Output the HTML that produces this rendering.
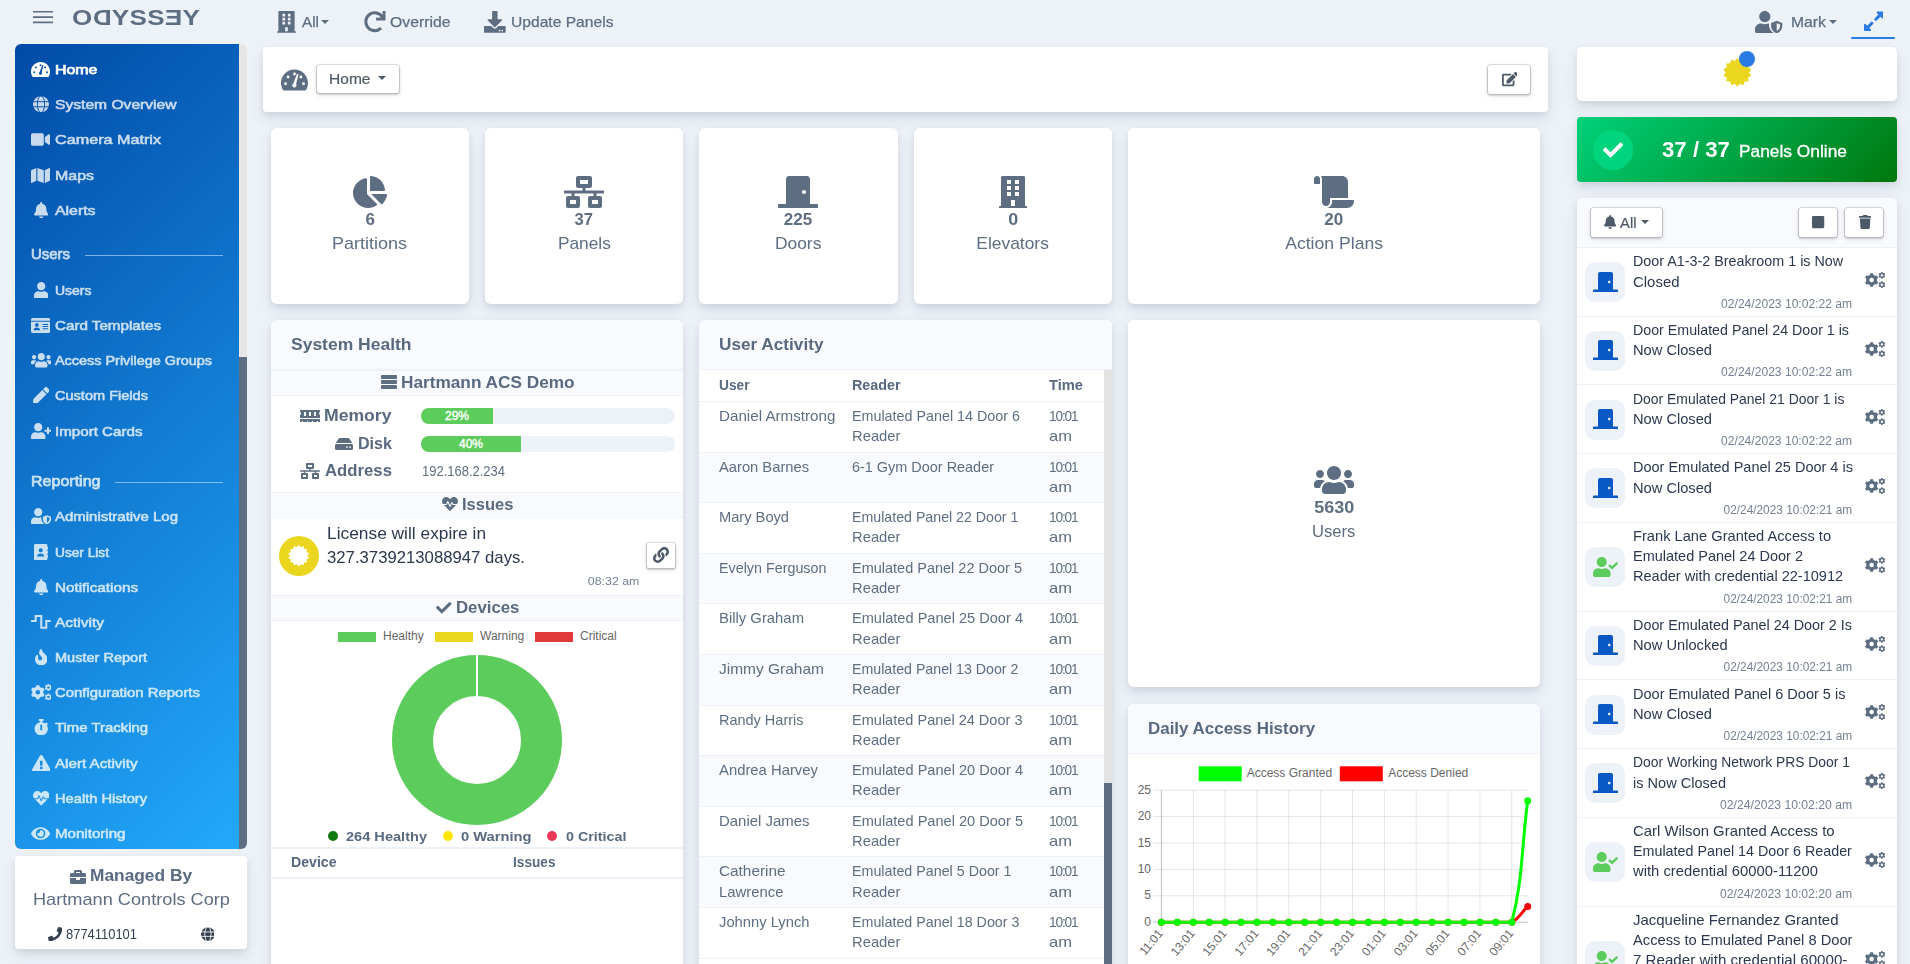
<!DOCTYPE html>
<html lang="en"><head><meta charset="utf-8"><title>Odyssey</title>
<style>
*{box-sizing:border-box}
html,body{margin:0;padding:0}
body{width:1910px;height:964px;overflow:hidden;position:relative;background:#edf2f9;font-family:"Liberation Sans",sans-serif;color:#5e6e82;font-size:14.4px;line-height:1.5}
.abs{position:absolute}
svg{display:block}
.ic{fill:currentColor}
.card{position:absolute;background:#fff;border-radius:6px;box-shadow:0 7px 14px 0 rgba(65,69,88,.1),0 3px 6px 0 rgba(0,0,0,.07)}
.hd{color:#344050}
.hb{position:absolute;left:0;width:20px;height:1.9px;background:#5e6e82}
.logo{font-size:22.8px;font-weight:bold;color:#5e6e82;letter-spacing:.3px;line-height:28px;white-space:nowrap;transform-origin:0 50%;transform:scaleX(1.142)}
.logo b{display:inline-block;transform:scaleX(-1)}
.tt{font-size:14.6px;line-height:22px;color:#5e6e82;white-space:nowrap;-webkit-text-stroke:.25px #5e6e82}
.caret{width:0;height:0;border-left:4.2px solid transparent;border-right:4.2px solid transparent;border-top:4.4px solid #5e6e82}
#side{left:15px;top:44px;width:224px;height:805px;border-radius:6px 0 0 6px;background:linear-gradient(135deg,#014ba7 0%,#22a9fb 100%);overflow:hidden}
.ni{position:absolute;left:16px;height:22px;width:200px;color:#fff;opacity:.78;font-size:13.1px;line-height:22px;white-space:nowrap;-webkit-text-stroke:.55px #fff}
.ni.act{opacity:1;-webkit-text-stroke:.75px #fff}
.ni .nt{position:absolute;left:24px;top:.6px}
.nl{position:absolute;left:16px;color:#fff;opacity:.78;font-size:15.2px;line-height:22px;-webkit-text-stroke:.75px #fff;white-space:nowrap;width:192px}
.nl i{position:absolute;top:12px;height:1px;background:rgba(190,225,255,.8)}
.mb1{font-size:17px;font-weight:bold;line-height:24px;color:#586980;white-space:nowrap}
.mb2{font-size:17px;line-height:24px;color:#5e6e82;white-space:nowrap}
.mb3{font-size:14.4px;line-height:22px;color:#344050;white-space:nowrap}
.btn{position:absolute;background:#fff;background-clip:padding-box;border:1px solid rgba(43,45,80,.13);border-radius:4px;box-shadow:0 2px 5px 0 rgba(43,45,80,.08),0 1px 1.5px 0 rgba(0,0,0,.07),0 1px 2px 0 rgba(0,0,0,.08)}
.bt{font-size:15.2px;line-height:22px;color:#4d5969;white-space:nowrap;-webkit-text-stroke:.2px #4d5969}
.sn{font-size:15.6px;font-weight:bold;line-height:22px;color:#5e6e82}
.sl{font-size:16.6px;line-height:26px;color:#5e6e82}
.chd{position:absolute;left:0;right:0;top:0;background:#f9fafd;border-bottom:1px solid #edf2f9}
.ct{font-size:16.4px;font-weight:bold;line-height:24px;color:#586980;white-space:nowrap}
.band{position:absolute;left:0;right:0;background:#f9fafd;border-top:1px solid #edf2f9;border-bottom:1px solid #edf2f9}
.bl{font-size:16.4px;font-weight:bold;line-height:24px;color:#586980;white-space:nowrap}
.pb{font-size:12px;line-height:16px;color:#fff;-webkit-text-stroke:.35px #fff}
.ip{font-size:14.2px;line-height:20px;color:#5e6e82}
.iss{font-size:16.4px;line-height:24px;color:#2c3850;white-space:nowrap}
.sm{font-size:11.6px;line-height:16px;color:#748194;white-space:nowrap}
.cl{font-size:12px;line-height:18px;color:#666;white-space:nowrap}
.dl{font-size:13.6px;font-weight:bold;line-height:20px;color:#586980;white-space:nowrap}
.th{font-size:14.2px;font-weight:bold;line-height:20px;color:#586980;white-space:nowrap}
.tr{left:0;width:405px;border-bottom:1px solid #edf2f9;font-size:14.4px;line-height:20px;color:#5e6e82;white-space:nowrap}
.po1{font-size:21.5px;font-weight:bold;line-height:30px;color:#fff;white-space:nowrap}
.po2{font-size:15.6px;line-height:22px;color:#fff;white-space:nowrap;-webkit-text-stroke:.3px #fff}
.ai{left:0;right:0;border-bottom:1px solid #edf2f9}
.at{font-size:14.4px;line-height:20px;color:#2c3850;white-space:nowrap}

</style></head>
<body>
<svg class="abs" style="left:33px;top:10px" width="20" height="14" viewBox="0 0 20 14"><path d="M0,1.8H20M0,7.1H20M0,12.4H20" stroke="#5e6e82" stroke-width="1.6" fill="none"/></svg>
<div class="abs logo" style="left:71.8px;top:3px">O<b>D</b>YSS<b>E</b>Y</div>
<div class="abs" style="left:277px;top:11px;color:#5e6e82"><svg class="ic" style="width:18.99px;height:21.70px;" viewBox="0 0 448 512"><path fill-rule="evenodd" d="M436 480h-20V24c0-13.3-10.7-24-24-24H56C42.7 0 32 10.7 32 24v456H12c-6.6 0-12 5.4-12 12v20h448v-20c0-6.600-5.400-12-12-12zM128,64h64v64h-64zM128,160h64v64h-64zM128,256h64v64h-64zM256,64h64v64h-64zM256,160h64v64h-64zM256,256h64v64h-64zM192 480v-96h64v96z"/></svg></div><div class="abs tt" style="left:301.5px;top:11px"><span style="display:inline-block;white-space:nowrap;transform-origin:0 50%;transform:scaleX(1.048);">All</span></div><div class="abs caret" style="left:320.5px;top:20px"></div>
<div class="abs" style="left:364px;top:11px;color:#5e6e82"><svg class="ic" style="width:21.50px;height:21.50px;" viewBox="0 0 512 512"><path d="M500.330 0h-47.410a12 12 0 0 0-12 12.570l4 82.760A247.420 247.420 0 0 0 256 8C119.340 8 7.900 119.530 8 256.190 8.100 393.070 119.100 504 256 504a247.100 247.100 0 0 0 166.180-63.910 12 12 0 0 0 .48-17.430l-34-34a12 12 0 0 0-16.380-.55A176 176 0 1 1 402.100 157.800l-101.530-4.870a12 12 0 0 0-12.570 12v47.410a12 12 0 0 0 12 12h200.330a12 12 0 0 0 12-12V12a12 12 0 0 0-12-12z"/></svg></div><div class="abs tt" style="left:390px;top:11px"><span style="display:inline-block;white-space:nowrap;transform-origin:0 50%;transform:scaleX(1.081);">Override</span></div>
<div class="abs" style="left:484px;top:11px;color:#5e6e82"><svg class="ic" style="width:21.70px;height:21.70px;" viewBox="0 0 512 512"><path d="M216 0h80c13.300 0 24 10.700 24 24v168h87.700c17.800 0 26.700 21.500 14.100 34.100L269.700 378.300c-7.500 7.500-19.800 7.500-27.300 0L90.100 226.100c-12.600-12.600-3.700-34.100 14.100-34.100H192V24c0-13.300 10.700-24 24-24zm296 376v112c0 13.300-10.700 24-24 24H24c-13.300 0-24-10.700-24-24V376c0-13.300 10.700-24 24-24h146.700l49 49c20.100 20.100 52.500 20.100 72.600 0l49-49H488c13.300 0 24 10.700 24 24zm-124 88c0-11-9-20-20-20s-20 9-20 20 9 20 20 20 20-9 20-20zm64 0c0-11-9-20-20-20s-20 9-20 20 9 20 20 20 20-9 20-20z"/></svg></div><div class="abs tt" style="left:511px;top:11px"><span style="display:inline-block;white-space:nowrap;transform-origin:0 50%;transform:scaleX(1.070);">Update Panels</span></div>
<div class="abs" style="left:1755px;top:11px;color:#5e6e82"><svg class="ic" style="width:28.00px;height:22.40px;" viewBox="0 0 640 512"><path fill-rule="evenodd" d="M224 256c70.700 0 128-57.300 128-128S294.700 0 224 0 96 57.300 96 128s57.300 128 128 128zm96 64c0-11 2-21 5-30-4-1-8-2-12-2h-16.700c-22.200 10.200-46.900 16-72.900 16s-50.600-5.800-72.900-16h-16.700C60.200 288 0 348.200 0 422.400V464c0 26.500 21.500 48 48 48h352c10 0 19-3 27-8-66-45-107-110-107-184zM496 224L368 272v64c0 90 60 150 128 176 68-26 128-86 128-176v-64z M496 278v180c45-22 78-68 78-122v-30z"/></svg></div><div class="abs tt" style="left:1791px;top:11px"><span style="display:inline-block;white-space:nowrap;transform-origin:0 50%;transform:scaleX(1.079);">Mark</span></div><div class="abs caret" style="left:1829px;top:20px"></div>
<div class="abs" style="left:1863.5px;top:9.5px;color:#2c7be5"><svg class="ic" style="width:19.69px;height:22.50px;" viewBox="0 0 448 512"><path d="M212.686 315.314L120 408l32.922 31.029c15.120 15.120 4.412 40.971-16.970 40.971h-112C10.697 480 0 469.255 0 456V344c0-21.382 25.803-32.090 40.922-16.971L72 360l92.686-92.686c6.248-6.248 16.379-6.248 22.627 0l25.373 25.373c6.249 6.248 6.249 16.378 0 22.627zm22.628-118.628L328 104l-32.922-31.029C279.958 57.851 290.666 32 312.048 32h112C437.303 32 448 42.745 448 56v112c0 21.382-25.803 32.090-40.922 16.971L376 152l-92.686 92.686c-6.248 6.248-16.379 6.248-22.627 0l-25.373-25.373c-6.249-6.248-6.249-16.378 0-22.627z"/></svg></div>
<div class="abs" style="left:1851px;top:37px;width:44px;height:2px;border-radius:1px;background:#2c7be5"></div>
<div class="abs" style="left:239px;top:44px;width:8px;height:805px;background:#e6e6e6;border-radius:0 6px 6px 0;overflow:hidden"><div style="position:absolute;left:0;top:313px;width:8px;height:492px;background:#5e6e82"></div></div>
<div id="side" class="abs">
<div class="ni act" style="top:14px"><svg class="ic" style="width:19.12px;height:17.00px;position:absolute;left:0.2px;top:2.5px" viewBox="0 0 576 512"><path fill-rule="evenodd" d="M288 32C128.94 32 0 160.94 0 320c0 52.8 14.25 102.26 39.06 144.8 5.61 9.62 16.3 15.2 27.44 15.2h443c11.14 0 21.83-5.58 27.44-15.2C561.75 422.26 576 372.8 576 320c0-159.06-128.94-288-288-288zM258,128a30,30 0 1,0 60,0a30,30 0 1,0 -60,0zM122,192a30,30 0 1,0 60,0a30,30 0 1,0 -60,0zM66,336a30,30 0 1,0 60,0a30,30 0 1,0 -60,0zM394,192a30,30 0 1,0 60,0a30,30 0 1,0 -60,0zM450,336a30,30 0 1,0 60,0a30,30 0 1,0 -60,0zM342,122L374,132L322,342A46,46 0 1,1 262,330z"/></svg><span class="nt"><span style="display:inline-block;white-space:nowrap;transform-origin:0 50%;transform:scaleX(1.216);">Home</span></span></div>
<div class="ni" style="top:49px"><svg class="ic" style="width:15.98px;height:16.50px;position:absolute;left:1.8px;top:2.8px" viewBox="0 0 496 512"><mask id="gm1"><rect width="496" height="512" fill="#000"/><circle cx="248" cy="256" r="248" fill="#fff"/><path d="M0,176H496M0,336H496" stroke="#000" stroke-width="30"/><ellipse cx="248" cy="256" rx="113" ry="262" fill="none" stroke="#000" stroke-width="30"/></mask><rect width="496" height="512" mask="url(#gm1)"/></svg><span class="nt"><span style="display:inline-block;white-space:nowrap;transform-origin:0 50%;transform:scaleX(1.193);">System Overview</span></span></div>
<div class="ni" style="top:84px"><svg class="ic" style="width:19.12px;height:17.00px;position:absolute;left:0.2px;top:2.5px" viewBox="0 0 576 512"><path d="M336.2 64H47.8C21.4 64 0 85.4 0 111.8v288.4C0 426.6 21.4 448 47.8 448h288.4c26.4 0 47.8-21.4 47.8-47.8V111.8c0-26.4-21.4-47.8-47.8-47.8zm189.4 37.7L416 177.3v157.4l109.6 75.5c21.2 14.6 50.4-.3 50.4-25.8V127.5c0-25.4-29.1-40.4-50.4-25.8z"/></svg><span class="nt"><span style="display:inline-block;white-space:nowrap;transform-origin:0 50%;transform:scaleX(1.235);">Camera Matrix</span></span></div>
<div class="ni" style="top:120px"><svg class="ic" style="width:19.12px;height:17.00px;position:absolute;left:0.2px;top:2.5px" viewBox="0 0 576 512"><path d="M0 117.66v346.32c0 11.32 11.43 19.06 21.94 14.86L160 416V32L20.120 87.950A32.006 32.006 0 0 0 0 117.660zM192 416l192 64V96L192 32v384zM554.060 33.160L416 96v384l139.880-55.950A31.996 31.996 0 0 0 576 394.340V48.020c0-11.320-11.430-19.060-21.940-14.860z"/></svg><span class="nt"><span style="display:inline-block;white-space:nowrap;transform-origin:0 50%;transform:scaleX(1.218);">Maps</span></span></div>
<div class="ni" style="top:155px"><svg class="ic" style="width:14.44px;height:16.50px;position:absolute;left:2.6px;top:2.8px" viewBox="0 0 448 512"><path d="M224 512c35.32 0 63.97-28.65 63.97-64H160.03c0 35.35 28.65 64 63.97 64zm215.39-149.71c-19.32-20.76-55.47-51.99-55.47-154.29 0-77.7-54.48-139.9-127.94-155.16V32c0-17.67-14.32-32-31.98-32s-31.98 14.33-31.98 32v20.84C118.56 68.1 64.08 130.3 64.08 208c0 102.3-36.15 133.53-55.47 154.29-6 6.45-8.66 14.16-8.61 21.71.11 16.4 12.98 32 32.1 32h383.8c19.12 0 32-15.6 32.1-32 .05-7.55-2.61-15.27-8.61-21.71z"/></svg><span class="nt"><span style="display:inline-block;white-space:nowrap;transform-origin:0 50%;transform:scaleX(1.210);">Alerts</span></span></div>
<div class="ni" style="top:235px"><svg class="ic" style="width:14.44px;height:16.50px;position:absolute;left:2.6px;top:2.8px" viewBox="0 0 448 512"><path d="M224 256c70.7 0 128-57.3 128-128S294.7 0 224 0 96 57.3 96 128s57.3 128 128 128zm89.6 32h-16.7c-22.2 10.2-46.9 16-72.9 16s-50.6-5.8-72.9-16h-16.7C60.2 288 0 348.2 0 422.4V464c0 26.5 21.5 48 48 48h352c26.5 0 48-21.5 48-48v-41.6c0-74.2-60.2-134.4-134.4-134.4z"/></svg><span class="nt"><span style="display:inline-block;white-space:nowrap;transform-origin:0 50%;transform:scaleX(1.067);">Users</span></span></div>
<div class="ni" style="top:270px"><svg class="ic" style="width:19.12px;height:17.00px;position:absolute;left:0.2px;top:2.5px" viewBox="0 0 576 512"><path fill-rule="evenodd" d="M48 32h480c26.500 0 48 21.500 48 48v32H0V80c0-26.500 21.500-48 48-48zM0 144h576v288c0 26.500-21.500 48-48 48H48c-26.500 0-48-21.500-48-48zM120,240a56,56 0 1,0 112,0a56,56 0 1,0 -112,0zM80,400c0-50,40-80,96-80s96,30,96,80zM352,208h160v32h-160zM352,272h160v32h-160zM352,336h160v32h-160z"/></svg><span class="nt"><span style="display:inline-block;white-space:nowrap;transform-origin:0 50%;transform:scaleX(1.159);">Card Templates</span></span></div>
<div class="ni" style="top:305px"><svg class="ic" style="width:20.62px;height:16.50px;position:absolute;left:-0.5px;top:2.8px" viewBox="0 0 640 512"><path d="M96 224c35.3 0 64-28.7 64-64s-28.7-64-64-64-64 28.7-64 64 28.7 64 64 64zm448 0c35.3 0 64-28.7 64-64s-28.7-64-64-64-64 28.7-64 64 28.7 64 64 64zm32 32h-64c-17.6 0-33.5 7.1-45.1 18.6 40.3 22.1 68.9 62 75.1 109.4h66c17.7 0 32-14.3 32-32v-32c0-35.3-28.7-64-64-64zm-256 0c61.9 0 112-50.1 112-112S381.9 32 320 32 208 82.1 208 144s50.1 112 112 112zm76.8 32h-8.3c-20.8 10-43.9 16-68.5 16s-47.6-6-68.5-16h-8.3C179.6 288 128 339.6 128 403.2V432c0 26.5 21.5 48 48 48h288c26.5 0 48-21.5 48-48v-28.8c0-63.6-51.6-115.2-115.2-115.2zm-223.7-13.4C161.5 263.1 145.6 256 128 256H64c-35.3 0-64 28.7-64 64v32c0 17.7 14.3 32 32 32h65.9c6.3-47.4 34.9-87.3 75.2-109.4z"/></svg><span class="nt"><span style="display:inline-block;white-space:nowrap;transform-origin:0 50%;transform:scaleX(1.101);">Access Privilege Groups</span></span></div>
<div class="ni" style="top:340px"><svg class="ic" style="width:16.50px;height:16.50px;position:absolute;left:1.6px;top:2.8px" viewBox="0 0 512 512"><path d="M290.740 93.240l128.020 128.020-277.990 277.990-114.140 12.600C11.350 513.540-1.560 500.620.140 485.340l12.700-114.220 277.900-277.880zm207.200-19.060l-60.110-60.110c-18.750-18.750-49.160-18.750-67.910 0l-56.550 56.550 128.020 128.020 56.550-56.550c18.750-18.760 18.750-49.160 0-67.910z"/></svg><span class="nt"><span style="display:inline-block;white-space:nowrap;transform-origin:0 50%;transform:scaleX(1.111);">Custom Fields</span></span></div>
<div class="ni" style="top:376px"><svg class="ic" style="width:20.62px;height:16.50px;position:absolute;left:-0.5px;top:2.8px" viewBox="0 0 640 512"><path d="M624 208h-64v-64c0-8.800-7.200-16-16-16h-32c-8.800 0-16 7.200-16 16v64h-64c-8.800 0-16 7.200-16 16v32c0 8.800 7.200 16 16 16h64v64c0 8.800 7.200 16 16 16h32c8.800 0 16-7.200 16-16v-64h64c8.800 0 16-7.200 16-16v-32c0-8.800-7.200-16-16-16zm-400 48c70.700 0 128-57.300 128-128S294.700 0 224 0 96 57.300 96 128s57.300 128 128 128zm89.600 32h-16.700c-22.200 10.200-46.900 16-72.900 16s-50.600-5.800-72.900-16h-16.700C60.200 288 0 348.200 0 422.400V464c0 26.500 21.500 48 48 48h352c26.500 0 48-21.500 48-48v-41.600c0-74.200-60.200-134.400-134.400-134.400z"/></svg><span class="nt"><span style="display:inline-block;white-space:nowrap;transform-origin:0 50%;transform:scaleX(1.156);">Import Cards</span></span></div>
<div class="ni" style="top:461px"><svg class="ic" style="width:20.62px;height:16.50px;position:absolute;left:-0.5px;top:2.8px" viewBox="0 0 640 512"><path fill-rule="evenodd" d="M224 256c70.700 0 128-57.300 128-128S294.700 0 224 0 96 57.300 96 128s57.300 128 128 128zm96 64c0-11 2-21 5-30-4-1-8-2-12-2h-16.700c-22.200 10.200-46.900 16-72.900 16s-50.600-5.800-72.900-16h-16.700C60.200 288 0 348.200 0 422.400V464c0 26.500 21.500 48 48 48h352c10 0 19-3 27-8-66-45-107-110-107-184zM496 224L368 272v64c0 90 60 150 128 176 68-26 128-86 128-176v-64z M496 278v180c45-22 78-68 78-122v-30z"/></svg><span class="nt"><span style="display:inline-block;white-space:nowrap;transform-origin:0 50%;transform:scaleX(1.142);">Administrative Log</span></span></div>
<div class="ni" style="top:497px"><svg class="ic" style="width:14.44px;height:16.50px;position:absolute;left:2.6px;top:2.8px" viewBox="0 0 448 512"><path fill-rule="evenodd" d="M436 160c6.600 0 12-5.400 12-12v-40c0-6.600-5.400-12-12-12h-20V48c0-26.500-21.500-48-48-48H48C21.500 0 0 21.500 0 48v416c0 26.500 21.500 48 48 48h320c26.500 0 48-21.500 48-48v-48h20c6.600 0 12-5.400 12-12v-40c0-6.600-5.400-12-12-12h-20v-64h20c6.600 0 12-5.400 12-12v-40c0-6.600-5.400-12-12-12h-20v-64h20zM144,192a64,64 0 1,0 128,0a64,64 0 1,0 -128,0zM96,384c0-56,50-88,112-88s112,32,112,88z"/></svg><span class="nt"><span style="display:inline-block;white-space:nowrap;transform-origin:0 50%;transform:scaleX(1.045);">User List</span></span></div>
<div class="ni" style="top:532px"><svg class="ic" style="width:14.44px;height:16.50px;position:absolute;left:2.6px;top:2.8px" viewBox="0 0 448 512"><path d="M224 512c35.32 0 63.97-28.65 63.97-64H160.03c0 35.35 28.65 64 63.97 64zm215.39-149.71c-19.32-20.76-55.47-51.99-55.47-154.29 0-77.7-54.48-139.9-127.94-155.16V32c0-17.67-14.32-32-31.98-32s-31.98 14.33-31.98 32v20.84C118.56 68.1 64.08 130.3 64.08 208c0 102.3-36.15 133.53-55.47 154.29-6 6.45-8.66 14.16-8.61 21.71.11 16.4 12.98 32 32.1 32h383.8c19.12 0 32-15.6 32.1-32 .05-7.55-2.61-15.27-8.61-21.71z"/></svg><span class="nt"><span style="display:inline-block;white-space:nowrap;transform-origin:0 50%;transform:scaleX(1.164);">Notifications</span></span></div>
<div class="ni" style="top:567px"><svg class="ic" style="width:19.70px;height:13.80px;position:absolute;left:-0.1px;top:4.1px" viewBox="0 0 197 138"><path d="M0,61H47V10H103V128H153V61H197" fill="none" stroke="currentColor" stroke-width="20"/></svg><span class="nt"><span style="display:inline-block;white-space:nowrap;transform-origin:0 50%;transform:scaleX(1.182);">Activity</span></span></div>
<div class="ni" style="top:602px"><svg class="ic" style="width:12.38px;height:16.50px;position:absolute;left:3.6px;top:2.8px" viewBox="0 0 384 512"><path d="M216 23.860c0-23.800-30.650-32.770-44.150-13.040C48 191.850 224 200 224 288c0 35.630-29.110 64.460-64.850 63.990C123.980 351.540 96 322.220 96 287.050v-85.510c0-21.700-26.470-32.230-41.430-16.500C27.800 213.160 0 261.330 0 320c0 105.870 86.130 192 192 192s192-86.130 192-192c0-170.290-168-193-168-296.140z"/></svg><span class="nt"><span style="display:inline-block;white-space:nowrap;transform-origin:0 50%;transform:scaleX(1.109);">Muster Report</span></span></div>
<div class="ni" style="top:637px"><svg class="ic" style="width:20.62px;height:16.50px;position:absolute;left:-0.5px;top:2.8px" viewBox="0 0 640 512"><path fill-rule="evenodd" d="M423.1,324.6L377.0,404.5L331.1,385.6L264.6,423.9L258.2,473.1L165.8,473.1L159.4,423.9L92.9,385.6L47.0,404.5L0.9,324.6L40.2,294.4L40.2,217.6L0.9,187.4L47.0,107.5L92.9,126.4L159.4,88.1L165.8,38.9L258.2,38.9L264.6,88.1L331.1,126.4L377.0,107.5L423.1,187.4L383.8,217.6L383.8,294.4zM140,256a72,72 0 1,0 144,0a72,72 0 1,0 -144,0zM648.4,141.2L624.7,182.3L599.6,170.8L566.3,190.0L563.7,217.5L516.3,217.5L513.7,190.0L480.4,170.8L455.3,182.3L431.6,141.2L454.1,125.2L454.1,86.8L431.6,70.8L455.3,29.7L480.4,41.2L513.7,22.0L516.3,-5.5L563.7,-5.5L566.3,22.0L599.6,41.2L624.7,29.7L648.4,70.8L625.9,86.8L625.9,125.2zM502,106a38,38 0 1,0 76,0a38,38 0 1,0 -76,0zM648.4,441.2L624.7,482.3L599.6,470.8L566.3,490.0L563.7,517.5L516.3,517.5L513.7,490.0L480.4,470.8L455.3,482.3L431.6,441.2L454.1,425.2L454.1,386.8L431.6,370.8L455.3,329.7L480.4,341.2L513.7,322.0L516.3,294.5L563.7,294.5L566.3,322.0L599.6,341.2L624.7,329.7L648.4,370.8L625.9,386.8L625.9,425.2zM502,406a38,38 0 1,0 76,0a38,38 0 1,0 -76,0z"/></svg><span class="nt"><span style="display:inline-block;white-space:nowrap;transform-origin:0 50%;transform:scaleX(1.138);">Configuration Reports</span></span></div>
<div class="ni" style="top:672px"><svg class="ic" style="width:14.44px;height:16.50px;position:absolute;left:2.6px;top:2.8px" viewBox="0 0 448 512"><path fill-rule="evenodd" d="M432 304c0 114.900-93.100 208-208 208S16 418.900 16 304c0-104 76.300-190.200 176-205.500V64h-28c-6.600 0-12-5.400-12-12V12c0-6.600 5.400-12 12-12h120c6.600 0 12 5.400 12 12v40c0 6.600-5.400 12-12 12h-28v34.500c37.500 5.800 71.700 21.600 99.700 44.600l27.500-27.500c4.700-4.700 12.300-4.700 17 0l28.300 28.300c4.700 4.700 4.700 12.300 0 17l-29.400 29.400-.6.600C419.700 223.300 432 262.200 432 304zM196,176h56v170h-56z"/></svg><span class="nt"><span style="display:inline-block;white-space:nowrap;transform-origin:0 50%;transform:scaleX(1.138);">Time Tracking</span></span></div>
<div class="ni" style="top:708px"><svg class="ic" style="width:18.56px;height:16.50px;position:absolute;left:0.5px;top:2.8px" viewBox="0 0 576 512"><path d="M569.517 440.013C587.975 472.007 564.806 512 527.94 512H48.054c-36.937 0-59.999-40.055-41.577-71.987L246.423 23.985c18.467-32.009 64.72-31.951 83.154 0l239.94 416.028zM288 354c-25.405 0-46 20.595-46 46s20.595 46 46 46 46-20.595 46-46-20.595-46-46-46zm-43.673-165.346l7.418 136c.347 6.364 5.609 11.346 11.982 11.346h48.546c6.373 0 11.635-4.982 11.982-11.346l7.418-136c.375-6.874-5.098-12.654-11.982-12.654h-63.383c-6.884 0-12.356 5.78-11.981 12.654z"/></svg><span class="nt"><span style="display:inline-block;white-space:nowrap;transform-origin:0 50%;transform:scaleX(1.157);">Alert Activity</span></span></div>
<div class="ni" style="top:743px"><svg class="ic" style="width:16.50px;height:16.50px;position:absolute;left:1.6px;top:2.8px" viewBox="0 0 512 512"><path d="M320.200 243.800l-49.700 99.400c-6 12.100-23.400 11.700-28.900-.6l-56.900-126.300-30 71.700H60.600l182.500 186.500c7.100 7.300 18.600 7.300 25.700 0L451.400 288H342.300l-22.100-44.200zM473.700 73.900l-2.400-2.500c-51.500-52.600-135.800-52.600-187.400 0L256 100l-27.900-28.500c-51.500-52.700-135.900-52.700-187.400 0l-2.400 2.400C-10.400 123.700-12.500 203 31 256h102.400l35.900-86.200c5.400-12.900 23.600-13.200 29.400-.4l58.200 129.300 49-97.900c5.900-11.800 22.700-11.800 28.600 0l27.600 55.200H481c43.500-53 41.400-132.300-7.300-182.100z"/></svg><span class="nt"><span style="display:inline-block;white-space:nowrap;transform-origin:0 50%;transform:scaleX(1.119);">Health History</span></span></div>
<div class="ni" style="top:778px"><svg class="ic" style="width:19.12px;height:17.00px;position:absolute;left:0.2px;top:2.5px" viewBox="0 0 576 512"><path d="M572.520 241.400C518.290 135.590 410.930 64 288 64S57.680 135.640 3.480 241.410a32.350 32.350 0 0 0 0 29.190C57.710 376.410 165.070 448 288 448s230.320-71.640 284.520-177.410a32.350 32.350 0 0 0 0-29.190zM288 400a144 144 0 1 1 144-144 143.930 143.930 0 0 1-144 144zm0-240a95.310 95.310 0 0 0-25.310 3.790 47.850 47.850 0 0 1-66.900 66.900A95.780 95.780 0 1 0 288 160z"/></svg><span class="nt"><span style="display:inline-block;white-space:nowrap;transform-origin:0 50%;transform:scaleX(1.153);">Monitoring</span></span></div>
<div class="nl" style="top:199px"><span style="display:inline-block;white-space:nowrap;transform-origin:0 50%;transform:scaleX(0.983);">Users</span><i style="left:54px;width:138px"></i></div>
<div class="nl" style="top:425.5px"><span style="display:inline-block;white-space:nowrap;transform-origin:0 50%;transform:scaleX(1.055);">Reporting</span><i style="left:84px;width:108px"></i></div>
</div>
<div class="card" style="left:15px;top:856px;width:232px;height:92.5px;border-radius:4px">
<div class="abs" style="left:55px;top:13px;color:#5e6e82"><svg class="ic" style="width:16.00px;height:16.00px;" viewBox="0 0 512 512"><path d="M320 336c0 8.840-7.160 16-16 16h-96c-8.840 0-16-7.160-16-16v-48H0v144c0 25.600 22.400 48 48 48h416c25.600 0 48-22.400 48-48V288H320v48zm144-208h-80V80c0-25.600-22.400-48-48-48H176c-25.600 0-48 22.400-48 48v48H48c-25.600 0-48 22.400-48 48v80h512v-80c0-25.600-22.400-48-48-48zm-144 0H192V96h128v32z"/></svg></div>
<div class="abs mb1" style="left:75px;top:8px"><span style="display:inline-block;white-space:nowrap;transform-origin:0 50%;transform:scaleX(1.019);">Managed By</span></div>
<div class="abs mb2" style="left:17.5px;top:32.2px"><span style="display:inline-block;white-space:nowrap;transform-origin:0 50%;transform:scaleX(1.069);">Hartmann Controls Corp</span></div>
<div class="abs" style="left:33px;top:70.5px;color:#344050"><svg class="ic" style="width:14.30px;height:14.30px;" viewBox="0 0 512 512"><path d="M493.400 24.600l-104-24c-11.300-2.600-22.900 3.300-27.500 13.900l-48 112c-4.200 9.800-1.400 21.300 6.900 28l60.600 49.600c-36 76.700-98.900 140.500-177.200 177.200l-49.600-60.600c-6.800-8.300-18.200-11.100-28-6.900l-112 48C3.900 366.500-2 378.100.6 389.400l24 104C27.100 504.200 36.700 512 48 512c256.100 0 464-207.500 464-464 0-11.200-7.700-20.900-18.600-23.400z"/></svg></div>
<div class="abs mb3" style="left:50.5px;top:66.5px"><span style="display:inline-block;white-space:nowrap;transform-origin:0 50%;transform:scaleX(0.899);">8774110101</span></div>
<div class="abs" style="left:185.5px;top:71px;color:#344050"><svg class="ic" style="width:13.85px;height:14.30px;" viewBox="0 0 496 512"><mask id="gm3"><rect width="496" height="512" fill="#000"/><circle cx="248" cy="256" r="248" fill="#fff"/><path d="M0,176H496M0,336H496" stroke="#000" stroke-width="30"/><ellipse cx="248" cy="256" rx="113" ry="262" fill="none" stroke="#000" stroke-width="30"/></mask><rect width="496" height="512" mask="url(#gm3)"/></svg></div>
</div>
<div class="card" style="left:263px;top:47px;width:1285px;height:64.5px;border-radius:4px">
<div class="abs" style="left:18px;top:21px;color:#5e6e82"><svg class="ic" style="width:27.00px;height:24.00px;" viewBox="0 0 576 512"><path fill-rule="evenodd" d="M288 32C128.94 32 0 160.94 0 320c0 52.8 14.25 102.26 39.06 144.8 5.61 9.62 16.3 15.2 27.44 15.2h443c11.14 0 21.83-5.58 27.44-15.2C561.75 422.26 576 372.8 576 320c0-159.06-128.94-288-288-288zM258,128a30,30 0 1,0 60,0a30,30 0 1,0 -60,0zM122,192a30,30 0 1,0 60,0a30,30 0 1,0 -60,0zM66,336a30,30 0 1,0 60,0a30,30 0 1,0 -60,0zM394,192a30,30 0 1,0 60,0a30,30 0 1,0 -60,0zM450,336a30,30 0 1,0 60,0a30,30 0 1,0 -60,0zM342,122L374,132L322,342A46,46 0 1,1 262,330z"/></svg></div>
<div class="btn" style="left:52.5px;top:17.3px;width:84px;height:30px"><div class="abs bt" style="left:12.7px;top:3px"><span style="display:inline-block;white-space:nowrap;transform-origin:0 50%;transform:scaleX(1.024);">Home</span></div><div class="abs caret" style="left:61.7px;top:10.9px;border-top-color:#4d5969"></div></div>
<div class="btn" style="left:1224px;top:17px;width:43.6px;height:30.6px"><div class="abs" style="left:13.5px;top:7.4px;color:#4d5969"><svg class="ic" style="width:15.97px;height:14.20px;" viewBox="0 0 576 512"><path d="M402.600 83.200l90.200 90.200c3.800 3.800 3.800 10 0 13.800L274.400 405.600l-92.800 10.300c-12.400 1.400-22.900-9.100-21.500-21.500l10.300-92.800L388.800 83.200c3.800-3.800 10-3.800 13.800 0zm162-22.900l-48.800-48.800c-15.200-15.200-39.900-15.200-55.200 0l-35.400 35.400c-3.800 3.800-3.800 10 0 13.800l90.200 90.200c3.800 3.800 10 3.800 13.800 0l35.400-35.400c15.200-15.300 15.200-40 0-55.200zM384 346.200V448H64V128h229.800c3.200 0 6.200-1.300 8.500-3.500l40-40c7.600-7.600 2.200-20.500-8.500-20.500H48C21.500 64 0 85.500 0 112v352c0 26.500 21.500 48 48 48h352c26.500 0 48-21.500 48-48V306.200c0-10.700-12.900-16-20.500-8.500l-40 40c-2.200 2.300-3.500 5.300-3.500 8.500z"/></svg></div></div>
</div>
<div class="card" style="left:271px;top:128px;width:198px;height:175.5px">
<div class="abs" style="left:82.0px;top:48px;color:#5e6e82"><svg class="ic" style="width:34.00px;height:32.00px;" viewBox="0 0 544 512"><path d="M527.790 288H290.500l158.030 158.030c6.040 6.040 15.980 6.530 22.190.68 38.700-36.460 65.320-85.610 73.130-140.860 1.340-9.460-6.510-17.850-16.060-17.850zm-15.830-64.800C503.720 103.740 408.260 8.280 288.800.040 279.680-.59 272 7.100 272 16.240V240h223.770c9.140 0 16.820-7.680 16.190-16.800zM224 288V50.710c0-9.550-8.390-17.400-17.840-16.060C86.990 51.490-4.100 155.600.14 280.370 4.500 408.510 114.830 513.590 243.030 511.980c50.400-.63 96.970-16.870 135.260-44.030 7.900-5.600 8.420-17.230 1.570-24.080L224 288z"/></svg></div>
<div class="abs sn" style="left:0;right:0;top:81.2px;text-align:center"><span style="display:inline-block;white-space:nowrap;transform-origin:50% 50%;transform:scaleX(1.094);">6</span></div>
<div class="abs sl" style="left:0;right:0;top:103px;text-align:center"><span style="display:inline-block;white-space:nowrap;transform-origin:50% 50%;transform:scaleX(1.084);">Partitions</span></div>
</div>
<div class="card" style="left:485px;top:128px;width:198px;height:175.5px">
<div class="abs" style="left:79.0px;top:48px;color:#5e6e82"><svg class="ic" style="width:40.00px;height:32.00px;" viewBox="0 0 640 512"><path d="M640 264v-16c0-8.840-7.160-16-16-16H344v-40h72c17.670 0 32-14.330 32-32V32c0-17.670-14.330-32-32-32H224c-17.670 0-32 14.330-32 32v128c0 17.670 14.330 32 32 32h72v40H16c-8.840 0-16 7.160-16 16v16c0 8.840 7.160 16 16 16h104v40H64c-17.670 0-32 14.330-32 32v128c0 17.670 14.330 32 32 32h160c17.670 0 32-14.330 32-32V352c0-17.670-14.330-32-32-32h-56v-40h304v40h-56c-17.670 0-32 14.330-32 32v128c0 17.670 14.330 32 32 32h160c17.670 0 32-14.330 32-32V352c0-17.670-14.330-32-32-32h-56v-40h104c8.840 0 16-7.160 16-16zM256 128V64h128v64H256zm-64 320H96v-64h96v64zm352 0h-96v-64h96v64z"/></svg></div>
<div class="abs sn" style="left:0;right:0;top:81.2px;text-align:center"><span style="display:inline-block;white-space:nowrap;transform-origin:50% 50%;transform:scaleX(1.066);">37</span></div>
<div class="abs sl" style="left:0;right:0;top:103px;text-align:center"><span style="display:inline-block;white-space:nowrap;transform-origin:50% 50%;transform:scaleX(1.044);">Panels</span></div>
</div>
<div class="card" style="left:699px;top:128px;width:198.5px;height:175.5px">
<div class="abs" style="left:79.2px;top:48px;color:#5e6e82"><svg class="ic" style="width:40.00px;height:32.00px;" viewBox="0 0 640 512"><path d="M624 448H512V50.8C512 22.78 490.47 0 464 0H175.99c-26.47 0-48 22.78-48 50.8V448H16c-8.84 0-16 7.16-16 16v32c0 8.84 7.16 16 16 16h608c8.84 0 16-7.16 16-16v-32c0-8.84-7.16-16-16-16zM415.99 288c-17.67 0-32-14.33-32-32s14.33-32 32-32 32 14.33 32 32c.01 17.67-14.32 32-32 32z"/></svg></div>
<div class="abs sn" style="left:0;right:0;top:81.2px;text-align:center"><span style="display:inline-block;white-space:nowrap;transform-origin:50% 50%;transform:scaleX(1.095);">225</span></div>
<div class="abs sl" style="left:0;right:0;top:103px;text-align:center"><span style="display:inline-block;white-space:nowrap;transform-origin:50% 50%;transform:scaleX(1.050);">Doors</span></div>
</div>
<div class="card" style="left:914px;top:128px;width:198px;height:175.5px">
<div class="abs" style="left:85.0px;top:48px;color:#5e6e82"><svg class="ic" style="width:28.00px;height:32.00px;" viewBox="0 0 448 512"><path fill-rule="evenodd" d="M436 480h-20V24c0-13.3-10.7-24-24-24H56C42.7 0 32 10.7 32 24v456H12c-6.6 0-12 5.4-12 12v20h448v-20c0-6.600-5.400-12-12-12zM128,64h64v64h-64zM128,160h64v64h-64zM128,256h64v64h-64zM256,64h64v64h-64zM256,160h64v64h-64zM256,256h64v64h-64zM192 480v-96h64v96z"/></svg></div>
<div class="abs sn" style="left:0;right:0;top:81.2px;text-align:center"><span style="display:inline-block;white-space:nowrap;transform-origin:50% 50%;transform:scaleX(1.151);">0</span></div>
<div class="abs sl" style="left:0;right:0;top:103px;text-align:center"><span style="display:inline-block;white-space:nowrap;transform-origin:50% 50%;transform:scaleX(1.048);">Elevators</span></div>
</div>
<div class="card" style="left:1128px;top:128px;width:412px;height:175.5px">
<div class="abs" style="left:186.0px;top:48px;color:#5e6e82"><svg class="ic" style="width:40.00px;height:32.00px;" viewBox="0 0 640 512"><path d="M48 0C21.530 0 0 21.530 0 48v64c0 8.840 7.160 16 16 16h80V48C96 21.530 74.470 0 48 0zm208 412.570V352h288V96c0-52.940-43.060-96-96-96H111.590C121.740 13.410 128 29.920 128 48v368c0 38.870 34.650 69.650 74.750 63.120C234.220 474 256 444.460 256 412.570zM288 384v32c0 52.930-43.060 96-96 96h336c61.860 0 112-50.140 112-112 0-8.840-7.160-16-16-16H288z"/></svg></div>
<div class="abs sn" style="left:0;right:0;top:81.2px;text-align:center"><span style="display:inline-block;white-space:nowrap;transform-origin:50% 50%;transform:scaleX(1.095);">20</span></div>
<div class="abs sl" style="left:0;right:0;top:103px;text-align:center"><span style="display:inline-block;white-space:nowrap;transform-origin:50% 50%;transform:scaleX(1.062);">Action Plans</span></div>
</div>
<div class="card" style="left:1128px;top:320px;width:412px;height:367px">
<div class="abs" style="left:186.0px;top:144px;color:#5e6e82"><svg class="ic" style="width:40.00px;height:32.00px;" viewBox="0 0 640 512"><path d="M96 224c35.3 0 64-28.7 64-64s-28.7-64-64-64-64 28.7-64 64 28.7 64 64 64zm448 0c35.3 0 64-28.7 64-64s-28.7-64-64-64-64 28.7-64 64 28.7 64 64 64zm32 32h-64c-17.6 0-33.5 7.1-45.1 18.6 40.3 22.1 68.9 62 75.1 109.4h66c17.7 0 32-14.3 32-32v-32c0-35.3-28.7-64-64-64zm-256 0c61.9 0 112-50.1 112-112S381.9 32 320 32 208 82.1 208 144s50.1 112 112 112zm76.8 32h-8.3c-20.8 10-43.9 16-68.5 16s-47.6-6-68.5-16h-8.3C179.6 288 128 339.6 128 403.2V432c0 26.5 21.5 48 48 48h288c26.5 0 48-21.5 48-48v-28.8c0-63.6-51.6-115.2-115.2-115.2zm-223.7-13.4C161.5 263.1 145.6 256 128 256H64c-35.3 0-64 28.7-64 64v32c0 17.7 14.3 32 32 32h65.9c6.3-47.4 34.9-87.3 75.2-109.4z"/></svg></div>
<div class="abs sn" style="left:0;right:0;top:177.2px;text-align:center"><span style="display:inline-block;white-space:nowrap;transform-origin:50% 50%;transform:scaleX(1.153);">5630</span></div>
<div class="abs sl" style="left:0;right:0;top:199px;text-align:center"><span style="display:inline-block;white-space:nowrap;transform-origin:50% 50%;transform:scaleX(1.004);">Users</span></div>
</div>
<div class="card" style="left:271px;top:320px;width:412px;height:660px;overflow:hidden"><div class="chd" style="height:49.5px"><div class="abs ct" style="left:20px;top:12px"><span style="display:inline-block;white-space:nowrap;transform-origin:0 50%;transform:scaleX(1.067);">System Health</span></div></div><div class="band" style="top:49.5px;height:26.5px"><div class="abs" style="left:110px;top:3.2px;color:#5e6e82"><svg class="ic" style="width:16.00px;height:16.00px;" viewBox="0 0 512 512"><path d="M480 160H32c-17.673 0-32-14.327-32-32V64c0-17.673 14.327-32 32-32h448c17.673 0 32 14.327 32 32v64c0 17.673-14.327 32-32 32zm0 160H32c-17.673 0-32-14.327-32-32v-64c0-17.673 14.327-32 32-32h448c17.673 0 32 14.327 32 32v64c0 17.673-14.327 32-32 32zm0 160H32c-17.673 0-32-14.327-32-32v-64c0-17.673 14.327-32 32-32h448c17.673 0 32 14.327 32 32v64c0 17.673-14.327 32-32 32z"/></svg></div><div class="abs bl" style="left:130px;top:-0.7px"><span style="display:inline-block;white-space:nowrap;transform-origin:0 50%;transform:scaleX(1.051);">Hartmann ACS Demo</span></div></div><div class="abs" style="left:29.2px;top:88px;color:#5e6e82"><svg class="ic" style="width:20.00px;height:16.00px;" viewBox="0 0 640 512"><path fill-rule="evenodd" d="M640 130.940V96c0-17.670-14.330-32-32-32H32C14.330 64 0 78.330 0 96v34.940c18.600 6.610 32 24.190 32 45.060s-13.400 38.450-32 45.060V320h640v-98.940c-18.600-6.610-32-24.190-32-45.060s13.400-38.450 32-45.060zM128,128h64v128h-64zM288,128h64v128h-64zM448,128h64v128h-64zM0 448h64v-26.670c0-8.840 7.160-16 16-16s16 7.160 16 16V448h128v-26.670c0-8.840 7.160-16 16-16s16 7.160 16 16V448h128v-26.670c0-8.840 7.160-16 16-16s16 7.160 16 16V448h128v-26.670c0-8.840 7.160-16 16-16s16 7.160 16 16V448h64v-96H0v96z"/></svg></div><div class="abs bl" style="left:53px;top:83px"><span style="display:inline-block;white-space:nowrap;transform-origin:0 50%;transform:scaleX(1.074);">Memory</span></div><div class="abs" style="left:150px;top:88px;width:254px;height:16px;border-radius:8px;background:#edf2f9;overflow:hidden"><div style="width:71.8px;height:16px;background:#5ccc5c"></div><div class="abs pb" style="left:16px;width:40px;top:0;text-align:center">29%</div></div><div class="abs" style="left:64.2px;top:116px;color:#5e6e82"><svg class="ic" style="width:18.00px;height:16.00px;" viewBox="0 0 576 512"><path fill-rule="evenodd" d="M576 304v96c0 26.510-21.490 48-48 48H48c-26.510 0-48-21.490-48-48v-96c0-26.510 21.490-48 48-48h480c26.510 0 48 21.490 48 48zm-48-80a79.557 79.557 0 0 1 30.777 6.165L462.250 85.374A48.003 48.003 0 0 0 422.311 64H153.689a48 48 0 0 0-39.938 21.374L17.223 230.165A79.557 79.557 0 0 1 48 224h480zM452,352a28,28 0 1,0 56,0a28,28 0 1,0 -56,0zM356,352a28,28 0 1,0 56,0a28,28 0 1,0 -56,0z"/></svg></div><div class="abs bl" style="left:87px;top:111px"><span style="display:inline-block;white-space:nowrap;transform-origin:0 50%;transform:scaleX(0.982);">Disk</span></div><div class="abs" style="left:150px;top:116px;width:254px;height:16px;border-radius:8px;background:#edf2f9;overflow:hidden"><div style="width:99.7px;height:16px;background:#5ccc5c"></div><div class="abs pb" style="left:30px;width:40px;top:0;text-align:center">40%</div></div><div class="abs" style="left:29.2px;top:143px;color:#5e6e82"><svg class="ic" style="width:20.00px;height:16.00px;" viewBox="0 0 640 512"><path d="M640 264v-16c0-8.840-7.160-16-16-16H344v-40h72c17.670 0 32-14.330 32-32V32c0-17.670-14.330-32-32-32H224c-17.670 0-32 14.330-32 32v128c0 17.670 14.330 32 32 32h72v40H16c-8.840 0-16 7.160-16 16v16c0 8.840 7.160 16 16 16h104v40H64c-17.670 0-32 14.330-32 32v128c0 17.670 14.330 32 32 32h160c17.670 0 32-14.330 32-32V352c0-17.670-14.330-32-32-32h-56v-40h304v40h-56c-17.670 0-32 14.330-32 32v128c0 17.670 14.330 32 32 32h160c17.670 0 32-14.330 32-32V352c0-17.670-14.330-32-32-32h-56v-40h104c8.840 0 16-7.160 16-16zM256 128V64h128v64H256zm-64 320H96v-64h96v64zm352 0h-96v-64h96v64z"/></svg></div><div class="abs bl" style="left:54px;top:138px"><span style="display:inline-block;white-space:nowrap;transform-origin:0 50%;transform:scaleX(1.021);">Address</span></div><div class="abs ip" style="left:150.5px;top:140.5px"><span style="display:inline-block;white-space:nowrap;transform-origin:0 50%;transform:scaleX(0.915);">192.168.2.234</span></div><div class="band" style="top:172px;height:26px"><div class="abs" style="left:171px;top:2.6px;color:#5e6e82"><svg class="ic" style="width:16.00px;height:16.00px;" viewBox="0 0 512 512"><path d="M320.200 243.800l-49.700 99.400c-6 12.100-23.400 11.700-28.900-.6l-56.900-126.300-30 71.700H60.600l182.500 186.500c7.100 7.300 18.600 7.300 25.700 0L451.400 288H342.300l-22.100-44.200zM473.700 73.900l-2.400-2.500c-51.500-52.600-135.800-52.600-187.400 0L256 100l-27.900-28.500c-51.500-52.700-135.900-52.700-187.400 0l-2.400 2.400C-10.400 123.700-12.500 203 31 256h102.400l35.900-86.200c5.400-12.900 23.600-13.200 29.400-.4l58.200 129.300 49-97.900c5.900-11.800 22.700-11.800 28.600 0l27.600 55.200H481c43.500-53 41.400-132.300-7.300-182.100z"/></svg></div><div class="abs bl" style="left:191px;top:-0.7px"><span style="display:inline-block;white-space:nowrap;transform-origin:0 50%;transform:scaleX(1.009);">Issues</span></div></div><div class="abs" style="left:8px;top:216px;width:40px;height:40px;border-radius:50%;background:#ebd61f"><div class="abs" style="left:9.3px;top:9.3px;color:#fff"><svg class="ic" style="width:21.40px;height:21.40px;" viewBox="0 0 512 512"><path d="M256.0,0.0L302.3,53.2L367.1,25.4L385.7,93.4L456.1,96.4L443.4,165.8L505.6,199.0L464.0,256.0L505.6,313.0L443.4,346.2L456.1,415.6L385.7,418.6L367.1,486.6L302.3,458.8L256.0,512.0L209.7,458.8L144.9,486.6L126.3,418.6L55.9,415.6L68.6,346.2L6.4,313.0L48.0,256.0L6.4,199.0L68.6,165.8L55.9,96.4L126.3,93.4L144.9,25.4L209.7,53.2z"/></svg></div></div>
<div class="abs iss" style="left:56px;top:200.7px"><span style="display:inline-block;white-space:nowrap;transform-origin:0 50%;transform:scaleX(1.058);">License will expire in</span></div>
<div class="abs iss" style="left:56px;top:224.7px"><span style="display:inline-block;white-space:nowrap;transform-origin:0 50%;transform:scaleX(1.020);">327.3739213088947 days.</span></div>
<div class="abs sm" style="right:44px;top:252.8px"><span style="display:inline-block;white-space:nowrap;transform-origin:100% 50%;transform:scaleX(1.065);">08:32 am</span></div>
<div class="btn" style="left:374.8px;top:221.8px;width:30px;height:27.5px;border-radius:3px"><div class="abs" style="left:6.3px;top:4.5px;color:#4d5969"><svg class="ic" style="width:16.00px;height:16.00px;" viewBox="0 0 512 512"><path d="M326.612 185.391c59.747 59.809 58.927 155.698.36 214.590-.11.120-.24.250-.36.370l-67.200 67.200c-59.270 59.270-155.699 59.262-214.960 0-59.270-59.260-59.270-155.700 0-214.960l37.106-37.106c9.840-9.840 26.786-3.300 27.294 10.606.648 17.722 3.826 35.527 9.690 52.721 1.986 5.822.567 12.262-3.783 16.612l-13.087 13.087c-28.026 28.026-28.905 73.660-1.155 101.960 28.024 28.579 74.086 28.749 102.325.51l67.200-67.190c28.191-28.191 28.073-73.757 0-101.830-3.701-3.694-7.429-6.564-10.341-8.569a16.037 16.037 0 0 1-6.947-12.606c-.396-10.567 3.348-21.456 11.698-29.806l21.054-21.055c5.521-5.521 14.182-6.199 20.584-1.731a152.482 152.482 0 0 1 20.522 17.197zM467.547 44.449c-59.261-59.262-155.690-59.270-214.960 0l-67.200 67.200c-.12.120-.25.250-.36.370-58.566 58.892-59.387 154.781.36 214.590a152.454 152.454 0 0 0 20.521 17.196c6.402 4.468 15.064 3.789 20.584-1.731l21.054-21.055c8.350-8.350 12.094-19.239 11.698-29.806a16.037 16.037 0 0 0-6.947-12.606c-2.912-2.005-6.640-4.875-10.341-8.569-28.073-28.073-28.191-73.639 0-101.830l67.200-67.190c28.239-28.239 74.300-28.069 102.325.51 27.750 28.300 26.872 73.934-1.155 101.960l-13.087 13.087c-4.350 4.350-5.769 10.790-3.783 16.612 5.864 17.194 9.042 34.999 9.690 52.721.509 13.906 17.454 20.446 27.294 10.606l37.106-37.106c59.271-59.259 59.271-155.699.001-214.959z"/></svg></div></div><div class="band" style="top:274.5px;height:26px"><div class="abs" style="left:165px;top:4px;color:#5e6e82"><svg class="ic" style="width:15.50px;height:15.50px;" viewBox="0 0 512 512"><path d="M173.898 439.404l-166.4-166.4c-9.997-9.997-9.997-26.206 0-36.204l36.203-36.204c9.997-9.998 26.207-9.998 36.204 0L192 312.69 432.095 72.596c9.997-9.997 26.207-9.997 36.204 0l36.203 36.204c9.997 9.997 9.997 26.206 0 36.204l-294.4 294.401c-9.998 9.997-26.207 9.997-36.204-.001z"/></svg></div><div class="abs bl" style="left:185px;top:-0.7px"><span style="display:inline-block;white-space:nowrap;transform-origin:0 50%;transform:scaleX(1.024);">Devices</span></div></div><div class="abs" style="left:67px;top:311.5px;width:38px;height:10.5px;background:#5ccc5c"></div><div class="abs cl" style="left:112px;top:307px">Healthy</div>
<div class="abs" style="left:164px;top:311.5px;width:38px;height:10.5px;background:#ebd61f"></div><div class="abs cl" style="left:209px;top:307px">Warning</div>
<div class="abs" style="left:264px;top:311.5px;width:38px;height:10.5px;background:#e03a3a"></div><div class="abs cl" style="left:309px;top:307px">Critical</div><svg class="abs" style="left:120px;top:334px" width="172" height="172" viewBox="-86 -86 172 172"><circle r="64.5" fill="none" stroke="#5ccc5c" stroke-width="41"/><rect x="-1" y="-86" width="2" height="43" fill="#fff"/></svg><div class="abs" style="left:57px;top:511.3px;width:10px;height:10px;border-radius:50%;background:#0f7a0f"></div><div class="abs dl" style="left:75px;top:506.8px"><span style="display:inline-block;white-space:nowrap;transform-origin:0 50%;transform:scaleX(1.072);">264 Healthy</span></div><div class="abs" style="left:172px;top:511.3px;width:10px;height:10px;border-radius:50%;background:#ffe600"></div><div class="abs dl" style="left:190px;top:506.8px"><span style="display:inline-block;white-space:nowrap;transform-origin:0 50%;transform:scaleX(1.081);">0 Warning</span></div><div class="abs" style="left:276px;top:511.3px;width:10px;height:10px;border-radius:50%;background:#e63757"></div><div class="abs dl" style="left:294.5px;top:506.8px"><span style="display:inline-block;white-space:nowrap;transform-origin:0 50%;transform:scaleX(1.054);">0 Critical</span></div><div class="abs" style="left:0;right:0;top:526.5px;height:2px;background:#edf2f9"></div><div class="abs" style="left:0;right:0;top:557px;height:2px;background:#edf2f9"></div><div class="abs th" style="left:20px;top:532px"><span style="display:inline-block;white-space:nowrap;transform-origin:0 50%;transform:scaleX(0.995);">Device</span></div><div class="abs th" style="left:242px;top:532px"><span style="display:inline-block;white-space:nowrap;transform-origin:0 50%;transform:scaleX(0.962);">Issues</span></div></div>
<div class="card" style="left:699px;top:320px;width:413px;height:660px;overflow:hidden"><div class="chd" style="height:49.5px"><div class="abs ct" style="left:20px;top:12px"><span style="display:inline-block;white-space:nowrap;transform-origin:0 50%;transform:scaleX(1.049);">User Activity</span></div></div><div class="abs" style="left:405px;top:49.5px;width:8px;height:620px;background:#e3e3e3"><div class="abs" style="left:0;top:413.5px;width:8px;height:210px;background:#5e6e82"></div></div><div class="abs th" style="left:20.1px;top:54.9px"><span style="display:inline-block;white-space:nowrap;transform-origin:0 50%;transform:scaleX(0.966);">User</span></div><div class="abs th" style="left:153px;top:54.9px"><span style="display:inline-block;white-space:nowrap;transform-origin:0 50%;transform:scaleX(1.008);">Reader</span></div><div class="abs th" style="left:350px;top:54.9px"><span style="display:inline-block;white-space:nowrap;transform-origin:0 50%;transform:scaleX(1.035);">Time</span></div><div class="abs" style="left:0;width:405px;top:80.5px;height:2px;background:#edf2f9"></div><div class="abs tr" style="top:82.0px;height:50.6px;background:#fff"><div class="abs" style="left:19.7px;top:4.1px"><span style="display:inline-block;white-space:nowrap;transform-origin:0 50%;transform:scaleX(1.055);">Daniel Armstrong</span></div><div class="abs" style="left:153px;top:4.1px"><span style="display:inline-block;white-space:nowrap;transform-origin:0 50%;transform:scaleX(0.995);">Emulated Panel 14 Door 6</span></div><div class="abs" style="left:153px;top:24.2px"><span style="display:inline-block;white-space:nowrap;transform-origin:0 50%;transform:scaleX(1.027);">Reader</span></div><div class="abs" style="left:350px;top:4.1px"><span style="display:inline-block;white-space:nowrap;transform-origin:0 50%;transform:scaleX(0.950);letter-spacing:-1.2px">10:01</span></div><div class="abs" style="left:350px;top:24.2px"><span style="display:inline-block;white-space:nowrap;transform-origin:0 50%;transform:scaleX(1.150);">am</span></div></div><div class="abs tr" style="top:132.6px;height:50.6px;background:#f9fafd"><div class="abs" style="left:19.7px;top:4.1px"><span style="display:inline-block;white-space:nowrap;transform-origin:0 50%;transform:scaleX(1.023);">Aaron Barnes</span></div><div class="abs" style="left:153px;top:4.1px"><span style="display:inline-block;white-space:nowrap;transform-origin:0 50%;transform:scaleX(1.003);">6-1 Gym Door Reader</span></div><div class="abs" style="left:350px;top:4.1px"><span style="display:inline-block;white-space:nowrap;transform-origin:0 50%;transform:scaleX(0.950);letter-spacing:-1.2px">10:01</span></div><div class="abs" style="left:350px;top:24.2px"><span style="display:inline-block;white-space:nowrap;transform-origin:0 50%;transform:scaleX(1.150);">am</span></div></div><div class="abs tr" style="top:183.2px;height:50.6px;background:#fff"><div class="abs" style="left:19.7px;top:4.1px"><span style="display:inline-block;white-space:nowrap;transform-origin:0 50%;transform:scaleX(1.018);">Mary Boyd</span></div><div class="abs" style="left:153px;top:4.1px"><span style="display:inline-block;white-space:nowrap;transform-origin:0 50%;transform:scaleX(0.986);">Emulated Panel 22 Door 1</span></div><div class="abs" style="left:153px;top:24.2px"><span style="display:inline-block;white-space:nowrap;transform-origin:0 50%;transform:scaleX(1.027);">Reader</span></div><div class="abs" style="left:350px;top:4.1px"><span style="display:inline-block;white-space:nowrap;transform-origin:0 50%;transform:scaleX(0.950);letter-spacing:-1.2px">10:01</span></div><div class="abs" style="left:350px;top:24.2px"><span style="display:inline-block;white-space:nowrap;transform-origin:0 50%;transform:scaleX(1.150);">am</span></div></div><div class="abs tr" style="top:233.8px;height:50.6px;background:#f9fafd"><div class="abs" style="left:19.7px;top:4.1px"><span style="display:inline-block;white-space:nowrap;transform-origin:0 50%;transform:scaleX(0.995);">Evelyn Ferguson</span></div><div class="abs" style="left:153px;top:4.1px"><span style="display:inline-block;white-space:nowrap;transform-origin:0 50%;transform:scaleX(1.007);">Emulated Panel 22 Door 5</span></div><div class="abs" style="left:153px;top:24.2px"><span style="display:inline-block;white-space:nowrap;transform-origin:0 50%;transform:scaleX(1.027);">Reader</span></div><div class="abs" style="left:350px;top:4.1px"><span style="display:inline-block;white-space:nowrap;transform-origin:0 50%;transform:scaleX(0.950);letter-spacing:-1.2px">10:01</span></div><div class="abs" style="left:350px;top:24.2px"><span style="display:inline-block;white-space:nowrap;transform-origin:0 50%;transform:scaleX(1.150);">am</span></div></div><div class="abs tr" style="top:284.4px;height:50.6px;background:#fff"><div class="abs" style="left:19.7px;top:4.1px"><span style="display:inline-block;white-space:nowrap;transform-origin:0 50%;transform:scaleX(1.032);">Billy Graham</span></div><div class="abs" style="left:153px;top:4.1px"><span style="display:inline-block;white-space:nowrap;transform-origin:0 50%;transform:scaleX(1.013);">Emulated Panel 25 Door 4</span></div><div class="abs" style="left:153px;top:24.2px"><span style="display:inline-block;white-space:nowrap;transform-origin:0 50%;transform:scaleX(1.027);">Reader</span></div><div class="abs" style="left:350px;top:4.1px"><span style="display:inline-block;white-space:nowrap;transform-origin:0 50%;transform:scaleX(0.950);letter-spacing:-1.2px">10:01</span></div><div class="abs" style="left:350px;top:24.2px"><span style="display:inline-block;white-space:nowrap;transform-origin:0 50%;transform:scaleX(1.150);">am</span></div></div><div class="abs tr" style="top:335.0px;height:50.6px;background:#f9fafd"><div class="abs" style="left:19.7px;top:4.1px"><span style="display:inline-block;white-space:nowrap;transform-origin:0 50%;transform:scaleX(1.076);">Jimmy Graham</span></div><div class="abs" style="left:153px;top:4.1px"><span style="display:inline-block;white-space:nowrap;transform-origin:0 50%;transform:scaleX(0.986);">Emulated Panel 13 Door 2</span></div><div class="abs" style="left:153px;top:24.2px"><span style="display:inline-block;white-space:nowrap;transform-origin:0 50%;transform:scaleX(1.027);">Reader</span></div><div class="abs" style="left:350px;top:4.1px"><span style="display:inline-block;white-space:nowrap;transform-origin:0 50%;transform:scaleX(0.950);letter-spacing:-1.2px">10:01</span></div><div class="abs" style="left:350px;top:24.2px"><span style="display:inline-block;white-space:nowrap;transform-origin:0 50%;transform:scaleX(1.150);">am</span></div></div><div class="abs tr" style="top:385.6px;height:50.6px;background:#fff"><div class="abs" style="left:19.7px;top:4.1px"><span style="display:inline-block;white-space:nowrap;transform-origin:0 50%;transform:scaleX(1.006);">Randy Harris</span></div><div class="abs" style="left:153px;top:4.1px"><span style="display:inline-block;white-space:nowrap;transform-origin:0 50%;transform:scaleX(1.010);">Emulated Panel 24 Door 3</span></div><div class="abs" style="left:153px;top:24.2px"><span style="display:inline-block;white-space:nowrap;transform-origin:0 50%;transform:scaleX(1.027);">Reader</span></div><div class="abs" style="left:350px;top:4.1px"><span style="display:inline-block;white-space:nowrap;transform-origin:0 50%;transform:scaleX(0.950);letter-spacing:-1.2px">10:01</span></div><div class="abs" style="left:350px;top:24.2px"><span style="display:inline-block;white-space:nowrap;transform-origin:0 50%;transform:scaleX(1.150);">am</span></div></div><div class="abs tr" style="top:436.2px;height:50.6px;background:#f9fafd"><div class="abs" style="left:19.7px;top:4.1px"><span style="display:inline-block;white-space:nowrap;transform-origin:0 50%;transform:scaleX(1.031);">Andrea Harvey</span></div><div class="abs" style="left:153px;top:4.1px"><span style="display:inline-block;white-space:nowrap;transform-origin:0 50%;transform:scaleX(1.013);">Emulated Panel 20 Door 4</span></div><div class="abs" style="left:153px;top:24.2px"><span style="display:inline-block;white-space:nowrap;transform-origin:0 50%;transform:scaleX(1.027);">Reader</span></div><div class="abs" style="left:350px;top:4.1px"><span style="display:inline-block;white-space:nowrap;transform-origin:0 50%;transform:scaleX(0.950);letter-spacing:-1.2px">10:01</span></div><div class="abs" style="left:350px;top:24.2px"><span style="display:inline-block;white-space:nowrap;transform-origin:0 50%;transform:scaleX(1.150);">am</span></div></div><div class="abs tr" style="top:486.8px;height:50.6px;background:#fff"><div class="abs" style="left:19.7px;top:4.1px"><span style="display:inline-block;white-space:nowrap;transform-origin:0 50%;transform:scaleX(1.038);">Daniel James</span></div><div class="abs" style="left:153px;top:4.1px"><span style="display:inline-block;white-space:nowrap;transform-origin:0 50%;transform:scaleX(1.013);">Emulated Panel 20 Door 5</span></div><div class="abs" style="left:153px;top:24.2px"><span style="display:inline-block;white-space:nowrap;transform-origin:0 50%;transform:scaleX(1.027);">Reader</span></div><div class="abs" style="left:350px;top:4.1px"><span style="display:inline-block;white-space:nowrap;transform-origin:0 50%;transform:scaleX(0.950);letter-spacing:-1.2px">10:01</span></div><div class="abs" style="left:350px;top:24.2px"><span style="display:inline-block;white-space:nowrap;transform-origin:0 50%;transform:scaleX(1.150);">am</span></div></div><div class="abs tr" style="top:537.4px;height:50.6px;background:#f9fafd"><div class="abs" style="left:19.7px;top:4.1px"><span style="display:inline-block;white-space:nowrap;transform-origin:0 50%;transform:scaleX(1.066);">Catherine</span></div><div class="abs" style="left:19.7px;top:24.2px"><span style="display:inline-block;white-space:nowrap;transform-origin:0 50%;transform:scaleX(1.034);">Lawrence</span></div><div class="abs" style="left:153px;top:4.1px"><span style="display:inline-block;white-space:nowrap;transform-origin:0 50%;transform:scaleX(0.992);">Emulated Panel 5 Door 1</span></div><div class="abs" style="left:153px;top:24.2px"><span style="display:inline-block;white-space:nowrap;transform-origin:0 50%;transform:scaleX(1.027);">Reader</span></div><div class="abs" style="left:350px;top:4.1px"><span style="display:inline-block;white-space:nowrap;transform-origin:0 50%;transform:scaleX(0.950);letter-spacing:-1.2px">10:01</span></div><div class="abs" style="left:350px;top:24.2px"><span style="display:inline-block;white-space:nowrap;transform-origin:0 50%;transform:scaleX(1.150);">am</span></div></div><div class="abs tr" style="top:588.0px;height:50.6px;background:#fff"><div class="abs" style="left:19.7px;top:4.1px"><span style="display:inline-block;white-space:nowrap;transform-origin:0 50%;transform:scaleX(1.025);">Johnny Lynch</span></div><div class="abs" style="left:153px;top:4.1px"><span style="display:inline-block;white-space:nowrap;transform-origin:0 50%;transform:scaleX(0.992);">Emulated Panel 18 Door 3</span></div><div class="abs" style="left:153px;top:24.2px"><span style="display:inline-block;white-space:nowrap;transform-origin:0 50%;transform:scaleX(1.027);">Reader</span></div><div class="abs" style="left:350px;top:4.1px"><span style="display:inline-block;white-space:nowrap;transform-origin:0 50%;transform:scaleX(0.950);letter-spacing:-1.2px">10:01</span></div><div class="abs" style="left:350px;top:24.2px"><span style="display:inline-block;white-space:nowrap;transform-origin:0 50%;transform:scaleX(1.150);">am</span></div></div></div>
<div class="card" style="left:1128px;top:704px;width:412px;height:280px;overflow:hidden"><div class="chd" style="height:49.5px"><div class="abs ct" style="left:20px;top:12px"><span style="display:inline-block;white-space:nowrap;transform-origin:0 50%;transform:scaleX(1.034);">Daily Access History</span></div></div><svg class="abs" style="left:0;top:0" width="412" height="270" font-family="Liberation Sans, sans-serif" font-size="12" fill="#666"><line x1="25.4" x2="399.7" y1="218.2" y2="218.2" stroke="rgba(0,0,0,.25)" stroke-width="1"/><text x="23.0" y="221.7" text-anchor="end">0</text><line x1="25.4" x2="399.7" y1="191.8" y2="191.8" stroke="rgba(0,0,0,.1)" stroke-width="1"/><text x="23.0" y="195.3" text-anchor="end">5</text><line x1="25.4" x2="399.7" y1="165.4" y2="165.4" stroke="rgba(0,0,0,.1)" stroke-width="1"/><text x="23.0" y="168.9" text-anchor="end">10</text><line x1="25.4" x2="399.7" y1="139.0" y2="139.0" stroke="rgba(0,0,0,.1)" stroke-width="1"/><text x="23.0" y="142.5" text-anchor="end">15</text><line x1="25.4" x2="399.7" y1="112.6" y2="112.6" stroke="rgba(0,0,0,.1)" stroke-width="1"/><text x="23.0" y="116.1" text-anchor="end">20</text><line x1="25.4" x2="399.7" y1="86.2" y2="86.2" stroke="rgba(0,0,0,.1)" stroke-width="1"/><text x="23.0" y="89.7" text-anchor="end">25</text><line x1="33.4" x2="33.4" y1="86.2" y2="226.2" stroke="rgba(0,0,0,.25)" stroke-width="1"/><text transform="translate(33.2,227.7) rotate(-50)" text-anchor="end" dominant-baseline="middle">11:01</text><line x1="65.3" x2="65.3" y1="86.2" y2="226.2" stroke="rgba(0,0,0,.1)" stroke-width="1"/><text transform="translate(65.1,227.7) rotate(-50)" text-anchor="end" dominant-baseline="middle">13:01</text><line x1="97.1" x2="97.1" y1="86.2" y2="226.2" stroke="rgba(0,0,0,.1)" stroke-width="1"/><text transform="translate(96.9,227.7) rotate(-50)" text-anchor="end" dominant-baseline="middle">15:01</text><line x1="129.0" x2="129.0" y1="86.2" y2="226.2" stroke="rgba(0,0,0,.1)" stroke-width="1"/><text transform="translate(128.8,227.7) rotate(-50)" text-anchor="end" dominant-baseline="middle">17:01</text><line x1="160.8" x2="160.8" y1="86.2" y2="226.2" stroke="rgba(0,0,0,.1)" stroke-width="1"/><text transform="translate(160.6,227.7) rotate(-50)" text-anchor="end" dominant-baseline="middle">19:01</text><line x1="192.7" x2="192.7" y1="86.2" y2="226.2" stroke="rgba(0,0,0,.1)" stroke-width="1"/><text transform="translate(192.5,227.7) rotate(-50)" text-anchor="end" dominant-baseline="middle">21:01</text><line x1="224.5" x2="224.5" y1="86.2" y2="226.2" stroke="rgba(0,0,0,.1)" stroke-width="1"/><text transform="translate(224.3,227.7) rotate(-50)" text-anchor="end" dominant-baseline="middle">23:01</text><line x1="256.4" x2="256.4" y1="86.2" y2="226.2" stroke="rgba(0,0,0,.1)" stroke-width="1"/><text transform="translate(256.2,227.7) rotate(-50)" text-anchor="end" dominant-baseline="middle">01:01</text><line x1="288.2" x2="288.2" y1="86.2" y2="226.2" stroke="rgba(0,0,0,.1)" stroke-width="1"/><text transform="translate(288.0,227.7) rotate(-50)" text-anchor="end" dominant-baseline="middle">03:01</text><line x1="320.1" x2="320.1" y1="86.2" y2="226.2" stroke="rgba(0,0,0,.1)" stroke-width="1"/><text transform="translate(319.9,227.7) rotate(-50)" text-anchor="end" dominant-baseline="middle">05:01</text><line x1="351.9" x2="351.9" y1="86.2" y2="226.2" stroke="rgba(0,0,0,.1)" stroke-width="1"/><text transform="translate(351.7,227.7) rotate(-50)" text-anchor="end" dominant-baseline="middle">07:01</text><line x1="383.8" x2="383.8" y1="86.2" y2="226.2" stroke="rgba(0,0,0,.1)" stroke-width="1"/><text transform="translate(383.6,227.7) rotate(-50)" text-anchor="end" dominant-baseline="middle">09:01</text><path d="M33.4,218.2L383.8,218.2C391.2,214.5 393.3,208.7 399.7,202.4" fill="none" stroke="#ff0000" stroke-width="3" stroke-linejoin="round"/><circle cx="33.4" cy="218.2" r="3.5" fill="#ff0000"/><circle cx="49.3" cy="218.2" r="3.5" fill="#ff0000"/><circle cx="65.3" cy="218.2" r="3.5" fill="#ff0000"/><circle cx="81.2" cy="218.2" r="3.5" fill="#ff0000"/><circle cx="97.1" cy="218.2" r="3.5" fill="#ff0000"/><circle cx="113.0" cy="218.2" r="3.5" fill="#ff0000"/><circle cx="129.0" cy="218.2" r="3.5" fill="#ff0000"/><circle cx="144.9" cy="218.2" r="3.5" fill="#ff0000"/><circle cx="160.8" cy="218.2" r="3.5" fill="#ff0000"/><circle cx="176.7" cy="218.2" r="3.5" fill="#ff0000"/><circle cx="192.7" cy="218.2" r="3.5" fill="#ff0000"/><circle cx="208.6" cy="218.2" r="3.5" fill="#ff0000"/><circle cx="224.5" cy="218.2" r="3.5" fill="#ff0000"/><circle cx="240.4" cy="218.2" r="3.5" fill="#ff0000"/><circle cx="256.4" cy="218.2" r="3.5" fill="#ff0000"/><circle cx="272.3" cy="218.2" r="3.5" fill="#ff0000"/><circle cx="288.2" cy="218.2" r="3.5" fill="#ff0000"/><circle cx="304.1" cy="218.2" r="3.5" fill="#ff0000"/><circle cx="320.1" cy="218.2" r="3.5" fill="#ff0000"/><circle cx="336.0" cy="218.2" r="3.5" fill="#ff0000"/><circle cx="351.9" cy="218.2" r="3.5" fill="#ff0000"/><circle cx="367.8" cy="218.2" r="3.5" fill="#ff0000"/><circle cx="383.8" cy="218.2" r="3.5" fill="#ff0000"/><circle cx="399.7" cy="202.4" r="3.5" fill="#ff0000"/><path d="M33.4,218.2L383.8,218.2C395.0,175.2 393.3,145.3 399.7,96.8" fill="none" stroke="#00ff00" stroke-width="3" stroke-linejoin="round"/><circle cx="33.4" cy="218.2" r="3.5" fill="#00ff00"/><circle cx="49.3" cy="218.2" r="3.5" fill="#00ff00"/><circle cx="65.3" cy="218.2" r="3.5" fill="#00ff00"/><circle cx="81.2" cy="218.2" r="3.5" fill="#00ff00"/><circle cx="97.1" cy="218.2" r="3.5" fill="#00ff00"/><circle cx="113.0" cy="218.2" r="3.5" fill="#00ff00"/><circle cx="129.0" cy="218.2" r="3.5" fill="#00ff00"/><circle cx="144.9" cy="218.2" r="3.5" fill="#00ff00"/><circle cx="160.8" cy="218.2" r="3.5" fill="#00ff00"/><circle cx="176.7" cy="218.2" r="3.5" fill="#00ff00"/><circle cx="192.7" cy="218.2" r="3.5" fill="#00ff00"/><circle cx="208.6" cy="218.2" r="3.5" fill="#00ff00"/><circle cx="224.5" cy="218.2" r="3.5" fill="#00ff00"/><circle cx="240.4" cy="218.2" r="3.5" fill="#00ff00"/><circle cx="256.4" cy="218.2" r="3.5" fill="#00ff00"/><circle cx="272.3" cy="218.2" r="3.5" fill="#00ff00"/><circle cx="288.2" cy="218.2" r="3.5" fill="#00ff00"/><circle cx="304.1" cy="218.2" r="3.5" fill="#00ff00"/><circle cx="320.1" cy="218.2" r="3.5" fill="#00ff00"/><circle cx="336.0" cy="218.2" r="3.5" fill="#00ff00"/><circle cx="351.9" cy="218.2" r="3.5" fill="#00ff00"/><circle cx="367.8" cy="218.2" r="3.5" fill="#00ff00"/><circle cx="383.8" cy="218.2" r="3.5" fill="#00ff00"/><circle cx="399.7" cy="96.8" r="3.5" fill="#00ff00"/><rect x="70.7" y="62.3" width="43" height="15" fill="#00ff00"/><text x="118.7" y="73.2">Access Granted</text><rect x="211.8" y="62.3" width="43" height="15" fill="#ff0000"/><text x="260.2" y="73.2">Access Denied</text></svg></div>
<div class="card" style="left:1577px;top:47px;width:320px;height:54px;border-radius:5px">
<div class="abs" style="left:145.5px;top:11px;color:#ebd61f"><svg class="ic" style="width:28.80px;height:28.80px;" viewBox="0 0 512 512"><path d="M256.0,0.0L302.3,53.2L367.1,25.4L385.7,93.4L456.1,96.4L443.4,165.8L505.6,199.0L464.0,256.0L505.6,313.0L443.4,346.2L456.1,415.6L385.7,418.6L367.1,486.6L302.3,458.8L256.0,512.0L209.7,458.8L144.9,486.6L126.3,418.6L55.9,415.6L68.6,346.2L6.4,313.0L48.0,256.0L6.4,199.0L68.6,165.8L55.9,96.4L126.3,93.4L144.9,25.4L209.7,53.2z"/></svg></div>
<div class="abs" style="left:161.9px;top:4.1px;width:16px;height:16px;border-radius:50%;background:#2c7be5"></div>
</div>
<div class="card" style="left:1577px;top:117px;width:320px;height:64.5px;border-radius:4px;background:linear-gradient(-45deg,#00770d 0%,#00d27a 100%)">
<div class="abs" style="left:16px;top:12.5px;width:40px;height:40px;border-radius:50%;background:rgba(0,214,128,.9)"></div>
<div class="abs" style="left:26px;top:22.5px;color:#fff"><svg class="ic" style="width:20.00px;height:20.00px;" viewBox="0 0 512 512"><path d="M173.898 439.404l-166.4-166.4c-9.997-9.997-9.997-26.206 0-36.204l36.203-36.204c9.997-9.998 26.207-9.998 36.204 0L192 312.69 432.095 72.596c9.997-9.997 26.207-9.997 36.204 0l36.203 36.204c9.997 9.997 9.997 26.206 0 36.204l-294.4 294.401c-9.998 9.997-26.207 9.997-36.204-.001z"/></svg></div>
<div class="abs po1" style="left:85px;top:17.6px"><span style="display:inline-block;white-space:nowrap;transform-origin:0 50%;transform:scaleX(1.034);">37 / 37</span></div>
<div class="abs po2" style="left:161.5px;top:23.7px"><span style="display:inline-block;white-space:nowrap;transform-origin:0 50%;transform:scaleX(1.112);">Panels Online</span></div>
</div>
<div class="card" style="left:1577px;top:198px;width:320px;height:780px;overflow:hidden"><div class="chd" style="height:49.5px"></div><div class="btn" style="left:13px;top:9px;width:72.6px;height:31px"><div class="abs" style="left:13px;top:7px;color:#4d5969"><svg class="ic" style="width:12.25px;height:14.00px;" viewBox="0 0 448 512"><path d="M224 512c35.32 0 63.97-28.65 63.97-64H160.03c0 35.35 28.65 64 63.97 64zm215.39-149.71c-19.32-20.76-55.47-51.99-55.47-154.29 0-77.7-54.48-139.9-127.94-155.16V32c0-17.67-14.32-32-31.98-32s-31.98 14.33-31.98 32v20.84C118.56 68.1 64.08 130.3 64.08 208c0 102.3-36.15 133.53-55.47 154.29-6 6.45-8.66 14.16-8.61 21.71.11 16.4 12.98 32 32.1 32h383.8c19.12 0 32-15.6 32.1-32 .05-7.55-2.61-15.27-8.61-21.71z"/></svg></div><div class="abs bt" style="left:29.3px;top:3.5px;font-size:14.6px"><span style="display:inline-block;white-space:nowrap;transform-origin:0 50%;transform:scaleX(1.017);">All</span></div><div class="abs caret" style="left:49.5px;top:12.3px;border-top-color:#4d5969;border-left-width:4.6px;border-right-width:4.6px;border-top-width:4.8px"></div></div>
<div class="btn" style="left:221px;top:9px;width:39.6px;height:31px"><div class="abs" style="left:13.4px;top:7.2px;color:#4d5969"><svg class="ic" style="width:12.25px;height:14.00px;" viewBox="0 0 448 512"><path d="M400 32H48C21.5 32 0 53.5 0 80v352c0 26.5 21.5 48 48 48h352c26.5 0 48-21.5 48-48V80c0-26.5-21.5-48-48-48z"/></svg></div></div>
<div class="btn" style="left:267px;top:9px;width:39.6px;height:31px"><div class="abs" style="left:13.6px;top:7.2px;color:#4d5969"><svg class="ic" style="width:12.25px;height:14.00px;" viewBox="0 0 448 512"><path d="M432 32H312l-9.4-18.7A24 24 0 0 0 281.1 0H166.8a23.72 23.72 0 0 0-21.4 13.3L136 32H16A16 16 0 0 0 0 48v32a16 16 0 0 0 16 16h416a16 16 0 0 0 16-16V48a16 16 0 0 0-16-16zM53.2 467a48 48 0 0 0 47.9 45h245.8a48 48 0 0 0 47.9-45L416 128H32z"/></svg></div></div><div class="abs ai" style="top:50.0px;height:68.7px"><div class="abs" style="left:8px;top:14.4px;width:40px;height:40px;border-radius:10px;background:#edf2f9"><div class="abs" style="left:7.5px;top:9.4px;color:#0a58c4"><svg class="ic" style="width:25.00px;height:20.00px;" viewBox="0 0 640 512"><path d="M624 448H512V50.8C512 22.78 490.47 0 464 0H175.99c-26.47 0-48 22.78-48 50.8V448H16c-8.84 0-16 7.16-16 16v32c0 8.84 7.16 16 16 16h608c8.84 0 16-7.16 16-16v-32c0-8.84-7.16-16-16-16zM415.99 288c-17.67 0-32-14.33-32-32s14.33-32 32-32 32 14.33 32 32c.01 17.67-14.32 32-32 32z"/></svg></div></div><div class="abs at" style="left:56px;top:3.3px"><span style="display:inline-block;white-space:nowrap;transform-origin:0 50%;transform:scaleX(0.995);">Door A1-3-2 Breakroom 1 is Now</span></div><div class="abs at" style="left:56px;top:23.5px"><span style="display:inline-block;white-space:nowrap;transform-origin:0 50%;transform:scaleX(1.038);">Closed</span></div><div class="abs sm" style="right:44.5px;top:47.8px;font-size:12px"><span style="display:inline-block;white-space:nowrap;transform-origin:100% 50%;transform:scaleX(1.007);">02/24/2023 10:02:22 am</span></div><div class="abs" style="left:288px;top:24.1px;color:#5e6e82"><svg class="ic" style="width:20.00px;height:16.00px;" viewBox="0 0 640 512"><path fill-rule="evenodd" d="M423.1,324.6L377.0,404.5L331.1,385.6L264.6,423.9L258.2,473.1L165.8,473.1L159.4,423.9L92.9,385.6L47.0,404.5L0.9,324.6L40.2,294.4L40.2,217.6L0.9,187.4L47.0,107.5L92.9,126.4L159.4,88.1L165.8,38.9L258.2,38.9L264.6,88.1L331.1,126.4L377.0,107.5L423.1,187.4L383.8,217.6L383.8,294.4zM140,256a72,72 0 1,0 144,0a72,72 0 1,0 -144,0zM648.4,141.2L624.7,182.3L599.6,170.8L566.3,190.0L563.7,217.5L516.3,217.5L513.7,190.0L480.4,170.8L455.3,182.3L431.6,141.2L454.1,125.2L454.1,86.8L431.6,70.8L455.3,29.7L480.4,41.2L513.7,22.0L516.3,-5.5L563.7,-5.5L566.3,22.0L599.6,41.2L624.7,29.7L648.4,70.8L625.9,86.8L625.9,125.2zM502,106a38,38 0 1,0 76,0a38,38 0 1,0 -76,0zM648.4,441.2L624.7,482.3L599.6,470.8L566.3,490.0L563.7,517.5L516.3,517.5L513.7,490.0L480.4,470.8L455.3,482.3L431.6,441.2L454.1,425.2L454.1,386.8L431.6,370.8L455.3,329.7L480.4,341.2L513.7,322.0L516.3,294.5L563.7,294.5L566.3,322.0L599.6,341.2L624.7,329.7L648.4,370.8L625.9,386.8L625.9,425.2zM502,406a38,38 0 1,0 76,0a38,38 0 1,0 -76,0z"/></svg></div></div><div class="abs ai" style="top:118.7px;height:68.7px"><div class="abs" style="left:8px;top:14.4px;width:40px;height:40px;border-radius:10px;background:#edf2f9"><div class="abs" style="left:7.5px;top:9.4px;color:#0a58c4"><svg class="ic" style="width:25.00px;height:20.00px;" viewBox="0 0 640 512"><path d="M624 448H512V50.8C512 22.78 490.47 0 464 0H175.99c-26.47 0-48 22.78-48 50.8V448H16c-8.84 0-16 7.16-16 16v32c0 8.84 7.16 16 16 16h608c8.84 0 16-7.16 16-16v-32c0-8.84-7.16-16-16-16zM415.99 288c-17.67 0-32-14.33-32-32s14.33-32 32-32 32 14.33 32 32c.01 17.67-14.32 32-32 32z"/></svg></div></div><div class="abs at" style="left:56px;top:3.3px"><span style="display:inline-block;white-space:nowrap;transform-origin:0 50%;transform:scaleX(0.989);">Door Emulated Panel 24 Door 1 is</span></div><div class="abs at" style="left:56px;top:23.5px"><span style="display:inline-block;white-space:nowrap;transform-origin:0 50%;transform:scaleX(1.018);">Now Closed</span></div><div class="abs sm" style="right:44.5px;top:47.8px;font-size:12px"><span style="display:inline-block;white-space:nowrap;transform-origin:100% 50%;transform:scaleX(1.007);">02/24/2023 10:02:22 am</span></div><div class="abs" style="left:288px;top:24.1px;color:#5e6e82"><svg class="ic" style="width:20.00px;height:16.00px;" viewBox="0 0 640 512"><path fill-rule="evenodd" d="M423.1,324.6L377.0,404.5L331.1,385.6L264.6,423.9L258.2,473.1L165.8,473.1L159.4,423.9L92.9,385.6L47.0,404.5L0.9,324.6L40.2,294.4L40.2,217.6L0.9,187.4L47.0,107.5L92.9,126.4L159.4,88.1L165.8,38.9L258.2,38.9L264.6,88.1L331.1,126.4L377.0,107.5L423.1,187.4L383.8,217.6L383.8,294.4zM140,256a72,72 0 1,0 144,0a72,72 0 1,0 -144,0zM648.4,141.2L624.7,182.3L599.6,170.8L566.3,190.0L563.7,217.5L516.3,217.5L513.7,190.0L480.4,170.8L455.3,182.3L431.6,141.2L454.1,125.2L454.1,86.8L431.6,70.8L455.3,29.7L480.4,41.2L513.7,22.0L516.3,-5.5L563.7,-5.5L566.3,22.0L599.6,41.2L624.7,29.7L648.4,70.8L625.9,86.8L625.9,125.2zM502,106a38,38 0 1,0 76,0a38,38 0 1,0 -76,0zM648.4,441.2L624.7,482.3L599.6,470.8L566.3,490.0L563.7,517.5L516.3,517.5L513.7,490.0L480.4,470.8L455.3,482.3L431.6,441.2L454.1,425.2L454.1,386.8L431.6,370.8L455.3,329.7L480.4,341.2L513.7,322.0L516.3,294.5L563.7,294.5L566.3,322.0L599.6,341.2L624.7,329.7L648.4,370.8L625.9,386.8L625.9,425.2zM502,406a38,38 0 1,0 76,0a38,38 0 1,0 -76,0z"/></svg></div></div><div class="abs ai" style="top:187.4px;height:68.7px"><div class="abs" style="left:8px;top:14.4px;width:40px;height:40px;border-radius:10px;background:#edf2f9"><div class="abs" style="left:7.5px;top:9.4px;color:#0a58c4"><svg class="ic" style="width:25.00px;height:20.00px;" viewBox="0 0 640 512"><path d="M624 448H512V50.8C512 22.78 490.47 0 464 0H175.99c-26.47 0-48 22.78-48 50.8V448H16c-8.84 0-16 7.16-16 16v32c0 8.84 7.16 16 16 16h608c8.84 0 16-7.16 16-16v-32c0-8.84-7.16-16-16-16zM415.99 288c-17.67 0-32-14.33-32-32s14.33-32 32-32 32 14.33 32 32c.01 17.67-14.32 32-32 32z"/></svg></div></div><div class="abs at" style="left:56px;top:3.3px"><span style="display:inline-block;white-space:nowrap;transform-origin:0 50%;transform:scaleX(0.968);">Door Emulated Panel 21 Door 1 is</span></div><div class="abs at" style="left:56px;top:23.5px"><span style="display:inline-block;white-space:nowrap;transform-origin:0 50%;transform:scaleX(1.018);">Now Closed</span></div><div class="abs sm" style="right:44.5px;top:47.8px;font-size:12px"><span style="display:inline-block;white-space:nowrap;transform-origin:100% 50%;transform:scaleX(1.007);">02/24/2023 10:02:22 am</span></div><div class="abs" style="left:288px;top:24.1px;color:#5e6e82"><svg class="ic" style="width:20.00px;height:16.00px;" viewBox="0 0 640 512"><path fill-rule="evenodd" d="M423.1,324.6L377.0,404.5L331.1,385.6L264.6,423.9L258.2,473.1L165.8,473.1L159.4,423.9L92.9,385.6L47.0,404.5L0.9,324.6L40.2,294.4L40.2,217.6L0.9,187.4L47.0,107.5L92.9,126.4L159.4,88.1L165.8,38.9L258.2,38.9L264.6,88.1L331.1,126.4L377.0,107.5L423.1,187.4L383.8,217.6L383.8,294.4zM140,256a72,72 0 1,0 144,0a72,72 0 1,0 -144,0zM648.4,141.2L624.7,182.3L599.6,170.8L566.3,190.0L563.7,217.5L516.3,217.5L513.7,190.0L480.4,170.8L455.3,182.3L431.6,141.2L454.1,125.2L454.1,86.8L431.6,70.8L455.3,29.7L480.4,41.2L513.7,22.0L516.3,-5.5L563.7,-5.5L566.3,22.0L599.6,41.2L624.7,29.7L648.4,70.8L625.9,86.8L625.9,125.2zM502,106a38,38 0 1,0 76,0a38,38 0 1,0 -76,0zM648.4,441.2L624.7,482.3L599.6,470.8L566.3,490.0L563.7,517.5L516.3,517.5L513.7,490.0L480.4,470.8L455.3,482.3L431.6,441.2L454.1,425.2L454.1,386.8L431.6,370.8L455.3,329.7L480.4,341.2L513.7,322.0L516.3,294.5L563.7,294.5L566.3,322.0L599.6,341.2L624.7,329.7L648.4,370.8L625.9,386.8L625.9,425.2zM502,406a38,38 0 1,0 76,0a38,38 0 1,0 -76,0z"/></svg></div></div><div class="abs ai" style="top:256.1px;height:68.7px"><div class="abs" style="left:8px;top:14.4px;width:40px;height:40px;border-radius:10px;background:#edf2f9"><div class="abs" style="left:7.5px;top:9.4px;color:#0a58c4"><svg class="ic" style="width:25.00px;height:20.00px;" viewBox="0 0 640 512"><path d="M624 448H512V50.8C512 22.78 490.47 0 464 0H175.99c-26.47 0-48 22.78-48 50.8V448H16c-8.84 0-16 7.16-16 16v32c0 8.84 7.16 16 16 16h608c8.84 0 16-7.16 16-16v-32c0-8.84-7.16-16-16-16zM415.99 288c-17.67 0-32-14.33-32-32s14.33-32 32-32 32 14.33 32 32c.01 17.67-14.32 32-32 32z"/></svg></div></div><div class="abs at" style="left:56px;top:3.3px"><span style="display:inline-block;white-space:nowrap;transform-origin:0 50%;transform:scaleX(1.007);">Door Emulated Panel 25 Door 4 is</span></div><div class="abs at" style="left:56px;top:23.5px"><span style="display:inline-block;white-space:nowrap;transform-origin:0 50%;transform:scaleX(1.018);">Now Closed</span></div><div class="abs sm" style="right:44.5px;top:47.8px;font-size:12px"><span style="display:inline-block;white-space:nowrap;transform-origin:100% 50%;transform:scaleX(0.988);">02/24/2023 10:02:21 am</span></div><div class="abs" style="left:288px;top:24.1px;color:#5e6e82"><svg class="ic" style="width:20.00px;height:16.00px;" viewBox="0 0 640 512"><path fill-rule="evenodd" d="M423.1,324.6L377.0,404.5L331.1,385.6L264.6,423.9L258.2,473.1L165.8,473.1L159.4,423.9L92.9,385.6L47.0,404.5L0.9,324.6L40.2,294.4L40.2,217.6L0.9,187.4L47.0,107.5L92.9,126.4L159.4,88.1L165.8,38.9L258.2,38.9L264.6,88.1L331.1,126.4L377.0,107.5L423.1,187.4L383.8,217.6L383.8,294.4zM140,256a72,72 0 1,0 144,0a72,72 0 1,0 -144,0zM648.4,141.2L624.7,182.3L599.6,170.8L566.3,190.0L563.7,217.5L516.3,217.5L513.7,190.0L480.4,170.8L455.3,182.3L431.6,141.2L454.1,125.2L454.1,86.8L431.6,70.8L455.3,29.7L480.4,41.2L513.7,22.0L516.3,-5.5L563.7,-5.5L566.3,22.0L599.6,41.2L624.7,29.7L648.4,70.8L625.9,86.8L625.9,125.2zM502,106a38,38 0 1,0 76,0a38,38 0 1,0 -76,0zM648.4,441.2L624.7,482.3L599.6,470.8L566.3,490.0L563.7,517.5L516.3,517.5L513.7,490.0L480.4,470.8L455.3,482.3L431.6,441.2L454.1,425.2L454.1,386.8L431.6,370.8L455.3,329.7L480.4,341.2L513.7,322.0L516.3,294.5L563.7,294.5L566.3,322.0L599.6,341.2L624.7,329.7L648.4,370.8L625.9,386.8L625.9,425.2zM502,406a38,38 0 1,0 76,0a38,38 0 1,0 -76,0z"/></svg></div></div><div class="abs ai" style="top:324.8px;height:88.9px"><div class="abs" style="left:8px;top:24.4px;width:40px;height:40px;border-radius:10px;background:#edf2f9"><div class="abs" style="left:7.5px;top:9.4px;color:#5ccc5c"><svg class="ic" style="width:25.00px;height:20.00px;" viewBox="0 0 640 512"><path d="M224 256c70.700 0 128-57.300 128-128S294.700 0 224 0 96 57.300 96 128s57.300 128 128 128zm89.600 32h-16.700c-22.200 10.200-46.900 16-72.900 16s-50.600-5.800-72.900-16h-16.700C60.200 288 0 348.200 0 422.400V464c0 26.500 21.500 48 48 48h352c26.500 0 48-21.500 48-48v-41.600c0-74.200-60.200-134.400-134.400-134.400zm323-128.400l-27.800-28.100c-4.600-4.700-12.100-4.700-16.800-.1l-104.800 104-45.500-45.800c-4.600-4.700-12.100-4.700-16.800-.1l-28.100 27.900c-4.700 4.600-4.700 12.100-.1 16.800l81.700 82.300c4.600 4.700 12.100 4.700 16.800.1l141.300-140.200c4.600-4.700 4.700-12.200.1-16.800z"/></svg></div></div><div class="abs at" style="left:56px;top:3.3px"><span style="display:inline-block;white-space:nowrap;transform-origin:0 50%;transform:scaleX(1.019);">Frank Lane Granted Access to</span></div><div class="abs at" style="left:56px;top:23.5px"><span style="display:inline-block;white-space:nowrap;transform-origin:0 50%;transform:scaleX(1.007);">Emulated Panel 24 Door 2</span></div><div class="abs at" style="left:56px;top:43.6px"><span style="display:inline-block;white-space:nowrap;transform-origin:0 50%;transform:scaleX(1.010);">Reader with credential 22-10912</span></div><div class="abs sm" style="right:44.5px;top:67.9px;font-size:12px"><span style="display:inline-block;white-space:nowrap;transform-origin:100% 50%;transform:scaleX(0.988);">02/24/2023 10:02:21 am</span></div><div class="abs" style="left:288px;top:34.1px;color:#5e6e82"><svg class="ic" style="width:20.00px;height:16.00px;" viewBox="0 0 640 512"><path fill-rule="evenodd" d="M423.1,324.6L377.0,404.5L331.1,385.6L264.6,423.9L258.2,473.1L165.8,473.1L159.4,423.9L92.9,385.6L47.0,404.5L0.9,324.6L40.2,294.4L40.2,217.6L0.9,187.4L47.0,107.5L92.9,126.4L159.4,88.1L165.8,38.9L258.2,38.9L264.6,88.1L331.1,126.4L377.0,107.5L423.1,187.4L383.8,217.6L383.8,294.4zM140,256a72,72 0 1,0 144,0a72,72 0 1,0 -144,0zM648.4,141.2L624.7,182.3L599.6,170.8L566.3,190.0L563.7,217.5L516.3,217.5L513.7,190.0L480.4,170.8L455.3,182.3L431.6,141.2L454.1,125.2L454.1,86.8L431.6,70.8L455.3,29.7L480.4,41.2L513.7,22.0L516.3,-5.5L563.7,-5.5L566.3,22.0L599.6,41.2L624.7,29.7L648.4,70.8L625.9,86.8L625.9,125.2zM502,106a38,38 0 1,0 76,0a38,38 0 1,0 -76,0zM648.4,441.2L624.7,482.3L599.6,470.8L566.3,490.0L563.7,517.5L516.3,517.5L513.7,490.0L480.4,470.8L455.3,482.3L431.6,441.2L454.1,425.2L454.1,386.8L431.6,370.8L455.3,329.7L480.4,341.2L513.7,322.0L516.3,294.5L563.7,294.5L566.3,322.0L599.6,341.2L624.7,329.7L648.4,370.8L625.9,386.8L625.9,425.2zM502,406a38,38 0 1,0 76,0a38,38 0 1,0 -76,0z"/></svg></div></div><div class="abs ai" style="top:413.7px;height:68.7px"><div class="abs" style="left:8px;top:14.4px;width:40px;height:40px;border-radius:10px;background:#edf2f9"><div class="abs" style="left:7.5px;top:9.4px;color:#0a58c4"><svg class="ic" style="width:25.00px;height:20.00px;" viewBox="0 0 640 512"><path d="M624 448H512V50.8C512 22.78 490.47 0 464 0H175.99c-26.47 0-48 22.78-48 50.8V448H16c-8.84 0-16 7.16-16 16v32c0 8.84 7.16 16 16 16h608c8.84 0 16-7.16 16-16v-32c0-8.84-7.16-16-16-16zM415.99 288c-17.67 0-32-14.33-32-32s14.33-32 32-32 32 14.33 32 32c.01 17.67-14.32 32-32 32z"/></svg></div></div><div class="abs at" style="left:56px;top:3.3px"><span style="display:inline-block;white-space:nowrap;transform-origin:0 50%;transform:scaleX(0.999);">Door Emulated Panel 24 Door 2 Is</span></div><div class="abs at" style="left:56px;top:23.5px"><span style="display:inline-block;white-space:nowrap;transform-origin:0 50%;transform:scaleX(1.019);">Now Unlocked</span></div><div class="abs sm" style="right:44.5px;top:47.8px;font-size:12px"><span style="display:inline-block;white-space:nowrap;transform-origin:100% 50%;transform:scaleX(0.988);">02/24/2023 10:02:21 am</span></div><div class="abs" style="left:288px;top:24.1px;color:#5e6e82"><svg class="ic" style="width:20.00px;height:16.00px;" viewBox="0 0 640 512"><path fill-rule="evenodd" d="M423.1,324.6L377.0,404.5L331.1,385.6L264.6,423.9L258.2,473.1L165.8,473.1L159.4,423.9L92.9,385.6L47.0,404.5L0.9,324.6L40.2,294.4L40.2,217.6L0.9,187.4L47.0,107.5L92.9,126.4L159.4,88.1L165.8,38.9L258.2,38.9L264.6,88.1L331.1,126.4L377.0,107.5L423.1,187.4L383.8,217.6L383.8,294.4zM140,256a72,72 0 1,0 144,0a72,72 0 1,0 -144,0zM648.4,141.2L624.7,182.3L599.6,170.8L566.3,190.0L563.7,217.5L516.3,217.5L513.7,190.0L480.4,170.8L455.3,182.3L431.6,141.2L454.1,125.2L454.1,86.8L431.6,70.8L455.3,29.7L480.4,41.2L513.7,22.0L516.3,-5.5L563.7,-5.5L566.3,22.0L599.6,41.2L624.7,29.7L648.4,70.8L625.9,86.8L625.9,125.2zM502,106a38,38 0 1,0 76,0a38,38 0 1,0 -76,0zM648.4,441.2L624.7,482.3L599.6,470.8L566.3,490.0L563.7,517.5L516.3,517.5L513.7,490.0L480.4,470.8L455.3,482.3L431.6,441.2L454.1,425.2L454.1,386.8L431.6,370.8L455.3,329.7L480.4,341.2L513.7,322.0L516.3,294.5L563.7,294.5L566.3,322.0L599.6,341.2L624.7,329.7L648.4,370.8L625.9,386.8L625.9,425.2zM502,406a38,38 0 1,0 76,0a38,38 0 1,0 -76,0z"/></svg></div></div><div class="abs ai" style="top:482.4px;height:68.7px"><div class="abs" style="left:8px;top:14.4px;width:40px;height:40px;border-radius:10px;background:#edf2f9"><div class="abs" style="left:7.5px;top:9.4px;color:#0a58c4"><svg class="ic" style="width:25.00px;height:20.00px;" viewBox="0 0 640 512"><path d="M624 448H512V50.8C512 22.78 490.47 0 464 0H175.99c-26.47 0-48 22.78-48 50.8V448H16c-8.84 0-16 7.16-16 16v32c0 8.84 7.16 16 16 16h608c8.84 0 16-7.16 16-16v-32c0-8.84-7.16-16-16-16zM415.99 288c-17.67 0-32-14.33-32-32s14.33-32 32-32 32 14.33 32 32c.01 17.67-14.32 32-32 32z"/></svg></div></div><div class="abs at" style="left:56px;top:3.3px"><span style="display:inline-block;white-space:nowrap;transform-origin:0 50%;transform:scaleX(1.010);">Door Emulated Panel 6 Door 5 is</span></div><div class="abs at" style="left:56px;top:23.5px"><span style="display:inline-block;white-space:nowrap;transform-origin:0 50%;transform:scaleX(1.018);">Now Closed</span></div><div class="abs sm" style="right:44.5px;top:47.8px;font-size:12px"><span style="display:inline-block;white-space:nowrap;transform-origin:100% 50%;transform:scaleX(0.988);">02/24/2023 10:02:21 am</span></div><div class="abs" style="left:288px;top:24.1px;color:#5e6e82"><svg class="ic" style="width:20.00px;height:16.00px;" viewBox="0 0 640 512"><path fill-rule="evenodd" d="M423.1,324.6L377.0,404.5L331.1,385.6L264.6,423.9L258.2,473.1L165.8,473.1L159.4,423.9L92.9,385.6L47.0,404.5L0.9,324.6L40.2,294.4L40.2,217.6L0.9,187.4L47.0,107.5L92.9,126.4L159.4,88.1L165.8,38.9L258.2,38.9L264.6,88.1L331.1,126.4L377.0,107.5L423.1,187.4L383.8,217.6L383.8,294.4zM140,256a72,72 0 1,0 144,0a72,72 0 1,0 -144,0zM648.4,141.2L624.7,182.3L599.6,170.8L566.3,190.0L563.7,217.5L516.3,217.5L513.7,190.0L480.4,170.8L455.3,182.3L431.6,141.2L454.1,125.2L454.1,86.8L431.6,70.8L455.3,29.7L480.4,41.2L513.7,22.0L516.3,-5.5L563.7,-5.5L566.3,22.0L599.6,41.2L624.7,29.7L648.4,70.8L625.9,86.8L625.9,125.2zM502,106a38,38 0 1,0 76,0a38,38 0 1,0 -76,0zM648.4,441.2L624.7,482.3L599.6,470.8L566.3,490.0L563.7,517.5L516.3,517.5L513.7,490.0L480.4,470.8L455.3,482.3L431.6,441.2L454.1,425.2L454.1,386.8L431.6,370.8L455.3,329.7L480.4,341.2L513.7,322.0L516.3,294.5L563.7,294.5L566.3,322.0L599.6,341.2L624.7,329.7L648.4,370.8L625.9,386.8L625.9,425.2zM502,406a38,38 0 1,0 76,0a38,38 0 1,0 -76,0z"/></svg></div></div><div class="abs ai" style="top:551.1px;height:68.7px"><div class="abs" style="left:8px;top:14.4px;width:40px;height:40px;border-radius:10px;background:#edf2f9"><div class="abs" style="left:7.5px;top:9.4px;color:#0a58c4"><svg class="ic" style="width:25.00px;height:20.00px;" viewBox="0 0 640 512"><path d="M624 448H512V50.8C512 22.78 490.47 0 464 0H175.99c-26.47 0-48 22.78-48 50.8V448H16c-8.84 0-16 7.16-16 16v32c0 8.84 7.16 16 16 16h608c8.84 0 16-7.16 16-16v-32c0-8.84-7.16-16-16-16zM415.99 288c-17.67 0-32-14.33-32-32s14.33-32 32-32 32 14.33 32 32c.01 17.67-14.32 32-32 32z"/></svg></div></div><div class="abs at" style="left:56px;top:3.3px"><span style="display:inline-block;white-space:nowrap;transform-origin:0 50%;transform:scaleX(0.963);">Door Working Network PRS Door 1</span></div><div class="abs at" style="left:56px;top:23.5px"><span style="display:inline-block;white-space:nowrap;transform-origin:0 50%;transform:scaleX(1.011);">is Now Closed</span></div><div class="abs sm" style="right:44.5px;top:47.8px;font-size:12px"><span style="display:inline-block;white-space:nowrap;transform-origin:100% 50%;transform:scaleX(1.015);">02/24/2023 10:02:20 am</span></div><div class="abs" style="left:288px;top:24.1px;color:#5e6e82"><svg class="ic" style="width:20.00px;height:16.00px;" viewBox="0 0 640 512"><path fill-rule="evenodd" d="M423.1,324.6L377.0,404.5L331.1,385.6L264.6,423.9L258.2,473.1L165.8,473.1L159.4,423.9L92.9,385.6L47.0,404.5L0.9,324.6L40.2,294.4L40.2,217.6L0.9,187.4L47.0,107.5L92.9,126.4L159.4,88.1L165.8,38.9L258.2,38.9L264.6,88.1L331.1,126.4L377.0,107.5L423.1,187.4L383.8,217.6L383.8,294.4zM140,256a72,72 0 1,0 144,0a72,72 0 1,0 -144,0zM648.4,141.2L624.7,182.3L599.6,170.8L566.3,190.0L563.7,217.5L516.3,217.5L513.7,190.0L480.4,170.8L455.3,182.3L431.6,141.2L454.1,125.2L454.1,86.8L431.6,70.8L455.3,29.7L480.4,41.2L513.7,22.0L516.3,-5.5L563.7,-5.5L566.3,22.0L599.6,41.2L624.7,29.7L648.4,70.8L625.9,86.8L625.9,125.2zM502,106a38,38 0 1,0 76,0a38,38 0 1,0 -76,0zM648.4,441.2L624.7,482.3L599.6,470.8L566.3,490.0L563.7,517.5L516.3,517.5L513.7,490.0L480.4,470.8L455.3,482.3L431.6,441.2L454.1,425.2L454.1,386.8L431.6,370.8L455.3,329.7L480.4,341.2L513.7,322.0L516.3,294.5L563.7,294.5L566.3,322.0L599.6,341.2L624.7,329.7L648.4,370.8L625.9,386.8L625.9,425.2zM502,406a38,38 0 1,0 76,0a38,38 0 1,0 -76,0z"/></svg></div></div><div class="abs ai" style="top:619.8px;height:88.9px"><div class="abs" style="left:8px;top:24.4px;width:40px;height:40px;border-radius:10px;background:#edf2f9"><div class="abs" style="left:7.5px;top:9.4px;color:#5ccc5c"><svg class="ic" style="width:25.00px;height:20.00px;" viewBox="0 0 640 512"><path d="M224 256c70.700 0 128-57.300 128-128S294.700 0 224 0 96 57.300 96 128s57.300 128 128 128zm89.600 32h-16.700c-22.200 10.200-46.900 16-72.900 16s-50.600-5.800-72.900-16h-16.700C60.200 288 0 348.200 0 422.400V464c0 26.500 21.500 48 48 48h352c26.500 0 48-21.500 48-48v-41.600c0-74.200-60.200-134.400-134.400-134.400zm323-128.400l-27.800-28.100c-4.600-4.700-12.100-4.700-16.800-.1l-104.800 104-45.500-45.800c-4.600-4.700-12.100-4.700-16.800-.1l-28.100 27.900c-4.700 4.600-4.700 12.100-.1 16.800l81.700 82.300c4.600 4.700 12.100 4.700 16.800.1l141.300-140.200c4.600-4.700 4.700-12.200.1-16.800z"/></svg></div></div><div class="abs at" style="left:56px;top:3.3px"><span style="display:inline-block;white-space:nowrap;transform-origin:0 50%;transform:scaleX(1.033);">Carl Wilson Granted Access to</span></div><div class="abs at" style="left:56px;top:23.5px"><span style="display:inline-block;white-space:nowrap;transform-origin:0 50%;transform:scaleX(0.995);">Emulated Panel 14 Door 6 Reader</span></div><div class="abs at" style="left:56px;top:43.6px"><span style="display:inline-block;white-space:nowrap;transform-origin:0 50%;transform:scaleX(1.029);">with credential 60000-11200</span></div><div class="abs sm" style="right:44.5px;top:67.9px;font-size:12px"><span style="display:inline-block;white-space:nowrap;transform-origin:100% 50%;transform:scaleX(1.015);">02/24/2023 10:02:20 am</span></div><div class="abs" style="left:288px;top:34.1px;color:#5e6e82"><svg class="ic" style="width:20.00px;height:16.00px;" viewBox="0 0 640 512"><path fill-rule="evenodd" d="M423.1,324.6L377.0,404.5L331.1,385.6L264.6,423.9L258.2,473.1L165.8,473.1L159.4,423.9L92.9,385.6L47.0,404.5L0.9,324.6L40.2,294.4L40.2,217.6L0.9,187.4L47.0,107.5L92.9,126.4L159.4,88.1L165.8,38.9L258.2,38.9L264.6,88.1L331.1,126.4L377.0,107.5L423.1,187.4L383.8,217.6L383.8,294.4zM140,256a72,72 0 1,0 144,0a72,72 0 1,0 -144,0zM648.4,141.2L624.7,182.3L599.6,170.8L566.3,190.0L563.7,217.5L516.3,217.5L513.7,190.0L480.4,170.8L455.3,182.3L431.6,141.2L454.1,125.2L454.1,86.8L431.6,70.8L455.3,29.7L480.4,41.2L513.7,22.0L516.3,-5.5L563.7,-5.5L566.3,22.0L599.6,41.2L624.7,29.7L648.4,70.8L625.9,86.8L625.9,125.2zM502,106a38,38 0 1,0 76,0a38,38 0 1,0 -76,0zM648.4,441.2L624.7,482.3L599.6,470.8L566.3,490.0L563.7,517.5L516.3,517.5L513.7,490.0L480.4,470.8L455.3,482.3L431.6,441.2L454.1,425.2L454.1,386.8L431.6,370.8L455.3,329.7L480.4,341.2L513.7,322.0L516.3,294.5L563.7,294.5L566.3,322.0L599.6,341.2L624.7,329.7L648.4,370.8L625.9,386.8L625.9,425.2zM502,406a38,38 0 1,0 76,0a38,38 0 1,0 -76,0z"/></svg></div></div><div class="abs ai" style="top:708.7px;height:109.0px"><div class="abs" style="left:8px;top:34.5px;width:40px;height:40px;border-radius:10px;background:#edf2f9"><div class="abs" style="left:7.5px;top:9.4px;color:#5ccc5c"><svg class="ic" style="width:25.00px;height:20.00px;" viewBox="0 0 640 512"><path d="M224 256c70.700 0 128-57.300 128-128S294.700 0 224 0 96 57.300 96 128s57.300 128 128 128zm89.600 32h-16.700c-22.200 10.200-46.900 16-72.900 16s-50.600-5.800-72.900-16h-16.700C60.200 288 0 348.200 0 422.400V464c0 26.500 21.500 48 48 48h352c26.500 0 48-21.500 48-48v-41.600c0-74.200-60.200-134.400-134.400-134.400zm323-128.400l-27.800-28.100c-4.600-4.700-12.100-4.700-16.800-.1l-104.800 104-45.500-45.800c-4.600-4.700-12.100-4.700-16.800-.1l-28.100 27.900c-4.700 4.600-4.700 12.100-.1 16.800l81.700 82.300c4.600 4.700 12.100 4.700 16.800.1l141.300-140.200c4.600-4.700 4.700-12.200.1-16.800z"/></svg></div></div><div class="abs at" style="left:56px;top:3.3px"><span style="display:inline-block;white-space:nowrap;transform-origin:0 50%;transform:scaleX(1.040);">Jacqueline Fernandez Granted</span></div><div class="abs at" style="left:56px;top:23.5px"><span style="display:inline-block;white-space:nowrap;transform-origin:0 50%;transform:scaleX(1.020);">Access to Emulated Panel 8 Door</span></div><div class="abs at" style="left:56px;top:43.6px"><span style="display:inline-block;white-space:nowrap;transform-origin:0 50%;transform:scaleX(1.051);">7 Reader with credential 60000-</span></div><div class="abs at" style="left:56px;top:63.8px"><span style="display:inline-block;white-space:nowrap;transform-origin:0 50%;transform:scaleX(0.976);">11200</span></div><div class="abs sm" style="right:44.5px;top:88.1px;font-size:12px"><span style="display:inline-block;white-space:nowrap;transform-origin:100% 50%;transform:scaleX(1.015);">02/24/2023 10:02:20 am</span></div><div class="abs" style="left:288px;top:44.2px;color:#5e6e82"><svg class="ic" style="width:20.00px;height:16.00px;" viewBox="0 0 640 512"><path fill-rule="evenodd" d="M423.1,324.6L377.0,404.5L331.1,385.6L264.6,423.9L258.2,473.1L165.8,473.1L159.4,423.9L92.9,385.6L47.0,404.5L0.9,324.6L40.2,294.4L40.2,217.6L0.9,187.4L47.0,107.5L92.9,126.4L159.4,88.1L165.8,38.9L258.2,38.9L264.6,88.1L331.1,126.4L377.0,107.5L423.1,187.4L383.8,217.6L383.8,294.4zM140,256a72,72 0 1,0 144,0a72,72 0 1,0 -144,0zM648.4,141.2L624.7,182.3L599.6,170.8L566.3,190.0L563.7,217.5L516.3,217.5L513.7,190.0L480.4,170.8L455.3,182.3L431.6,141.2L454.1,125.2L454.1,86.8L431.6,70.8L455.3,29.7L480.4,41.2L513.7,22.0L516.3,-5.5L563.7,-5.5L566.3,22.0L599.6,41.2L624.7,29.7L648.4,70.8L625.9,86.8L625.9,125.2zM502,106a38,38 0 1,0 76,0a38,38 0 1,0 -76,0zM648.4,441.2L624.7,482.3L599.6,470.8L566.3,490.0L563.7,517.5L516.3,517.5L513.7,490.0L480.4,470.8L455.3,482.3L431.6,441.2L454.1,425.2L454.1,386.8L431.6,370.8L455.3,329.7L480.4,341.2L513.7,322.0L516.3,294.5L563.7,294.5L566.3,322.0L599.6,341.2L624.7,329.7L648.4,370.8L625.9,386.8L625.9,425.2zM502,406a38,38 0 1,0 76,0a38,38 0 1,0 -76,0z"/></svg></div></div></div>
</body></html>
